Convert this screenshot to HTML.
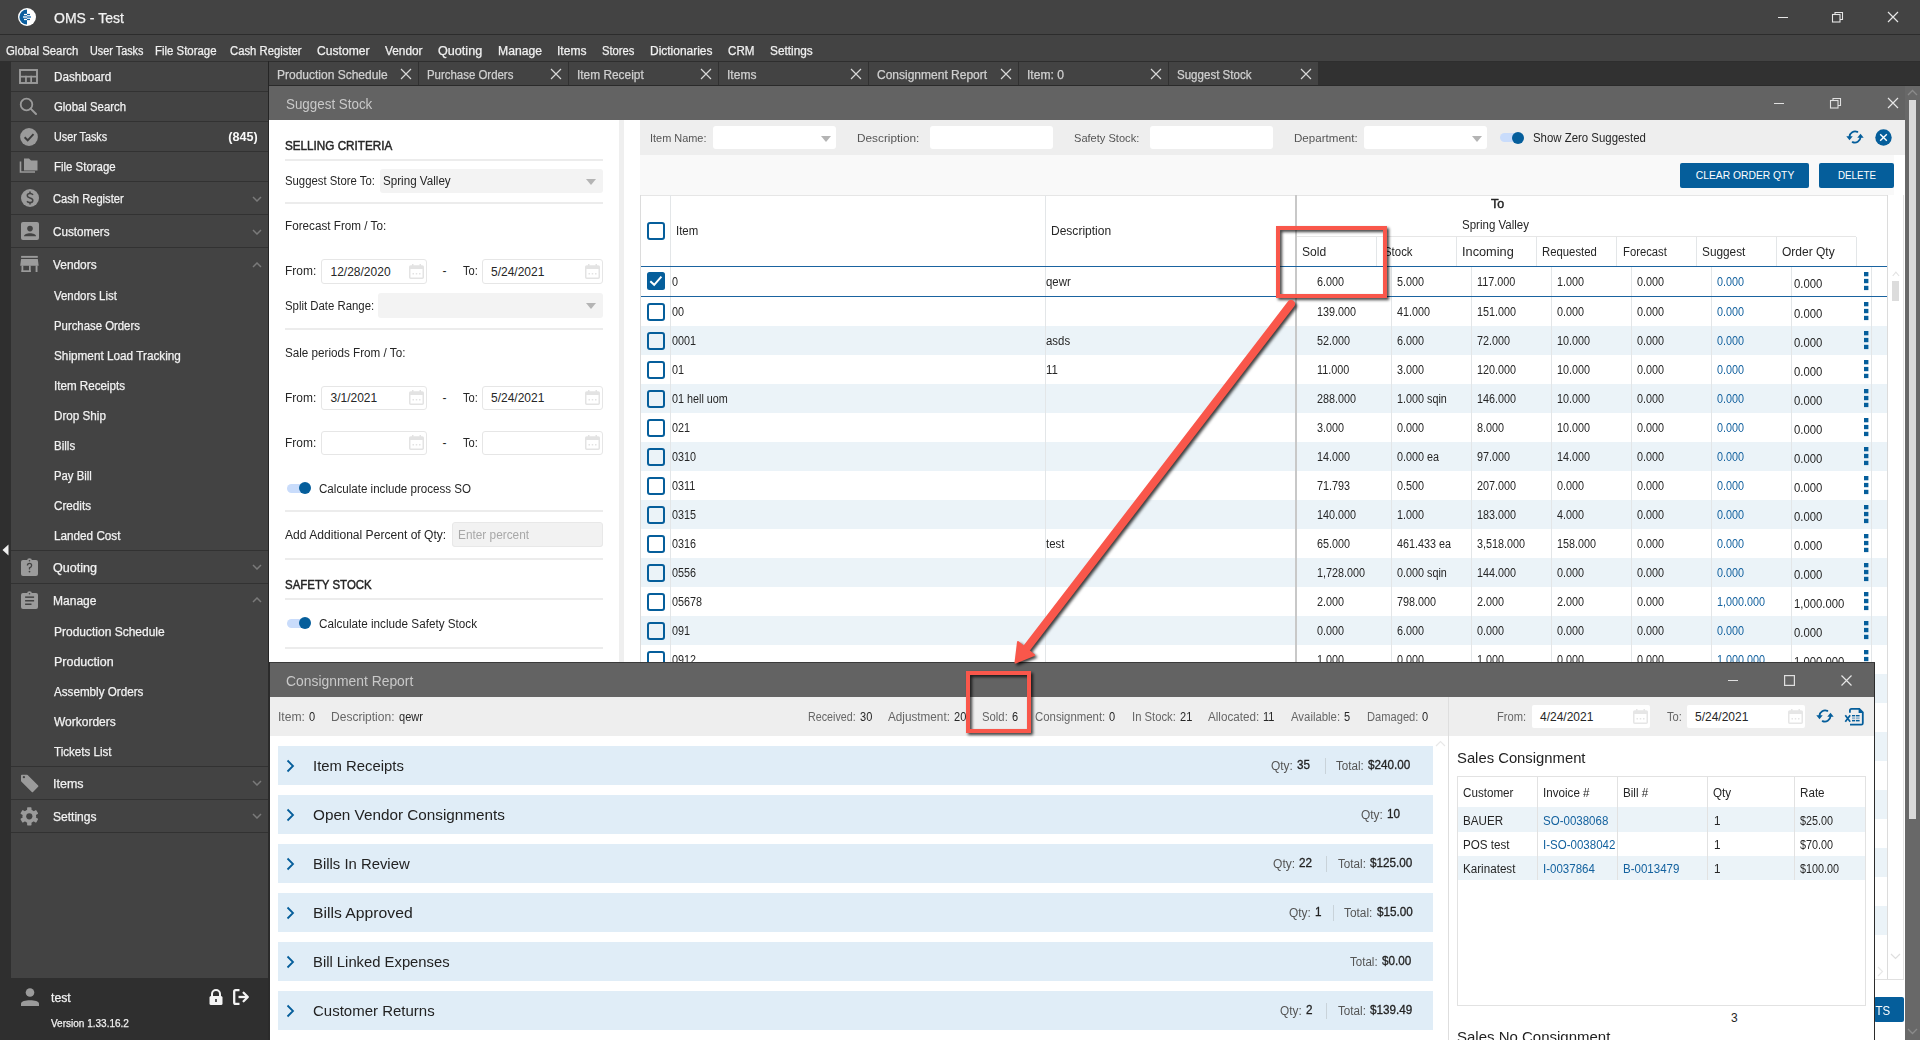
<!DOCTYPE html><html><head><meta charset="utf-8"><style>
html,body{margin:0;padding:0;width:1920px;height:1040px;overflow:hidden;background:#2f2f2f;font-family:"Liberation Sans",sans-serif;}
.r{position:absolute;}
.t{position:absolute;white-space:pre;line-height:1;}
.lt{-webkit-text-stroke:0.25px currentColor;}
.sb{-webkit-text-stroke:0.45px currentColor;}
.sm{-webkit-text-stroke:0.3px currentColor;}
</style></head><body>
<div class="r" style="left:0px;top:0px;width:1920px;height:34px;background:#434343;"></div>
<div class="r" style="left:0px;top:34px;width:1920px;height:1px;background:#2c2c2c;"></div>
<div class="r" style="left:0px;top:35px;width:1920px;height:26px;background:#434343;"></div>
<svg class="r" style="left:17px;top:7px;" width="20" height="20" viewBox="0 0 20 20"><circle cx="10" cy="10" r="9" fill="#fff"/><path d="M10 2.4 A7.6 7.6 0 0 0 10 17.6 Z" fill="#0b5e9e"/><rect x="7" y="6.9" width="3" height="1.3" fill="#fff"/><rect x="10" y="6.9" width="3" height="1.3" fill="#0b5e9e"/><rect x="6" y="9.2" width="4" height="1.6" fill="#cfe0ee"/><rect x="10" y="9.2" width="4" height="1.6" fill="#3f86c0"/><rect x="7" y="11.8" width="3" height="1.3" fill="#fff"/><rect x="10" y="11.8" width="3" height="1.3" fill="#0b5e9e"/></svg>
<div class="t lt" style="left:54px;transform:scaleX(1.0011);transform-origin:0 0;top:11.05px;font-size:14px;color:#f2f2f2;font-weight:normal;">OMS - Test</div>
<div class="r" style="left:1778px;top:16.5px;width:10px;height:1.2px;background:#e6e6e6;"></div>
<svg class="r" style="left:1831px;top:11px;" width="13" height="12" viewBox="0 0 13 12"><rect x="1.5" y="3.5" width="7.5" height="7.5" fill="none" stroke="#e6e6e6" stroke-width="1.1"/><path d="M4 3.5 V1.5 H11.5 V8.5 H9" fill="none" stroke="#e6e6e6" stroke-width="1.1"/></svg>
<svg class="r" style="left:1887px;top:11px;" width="12" height="12" viewBox="0 0 12 12"><path d="M1 1 L11 11 M11 1 L1 11" stroke="#e6e6e6" stroke-width="1.2"/></svg>
<div class="t lt" style="left:5.6px;transform:scaleX(0.9505);transform-origin:0 0;top:44.72px;font-size:12px;color:#f0f0f0;font-weight:normal;">Global Search</div>
<div class="t lt" style="left:89.6px;transform:scaleX(0.9038);transform-origin:0 0;top:44.72px;font-size:12px;color:#f0f0f0;font-weight:normal;">User Tasks</div>
<div class="t lt" style="left:154.8px;transform:scaleX(0.9503);transform-origin:0 0;top:44.72px;font-size:12px;color:#f0f0f0;font-weight:normal;">File Storage</div>
<div class="t lt" style="left:229.6px;transform:scaleX(0.9414);transform-origin:0 0;top:44.72px;font-size:12px;color:#f0f0f0;font-weight:normal;">Cash Register</div>
<div class="t lt" style="left:316.7px;transform:scaleX(1.0098);transform-origin:0 0;top:44.72px;font-size:12px;color:#f0f0f0;font-weight:normal;">Customer</div>
<div class="t lt" style="left:384.7px;transform:scaleX(0.9859);transform-origin:0 0;top:44.72px;font-size:12px;color:#f0f0f0;font-weight:normal;">Vendor</div>
<div class="t lt" style="left:437.5px;transform:scaleX(1.0506);transform-origin:0 0;top:44.72px;font-size:12px;color:#f0f0f0;font-weight:normal;">Quoting</div>
<div class="t lt" style="left:497.5px;transform:scaleX(1.0139);transform-origin:0 0;top:44.72px;font-size:12px;color:#f0f0f0;font-weight:normal;">Manage</div>
<div class="t lt" style="left:556.5px;transform:scaleX(1.0044);transform-origin:0 0;top:44.72px;font-size:12px;color:#f0f0f0;font-weight:normal;">Items</div>
<div class="t lt" style="left:601.5px;transform:scaleX(0.9347);transform-origin:0 0;top:44.72px;font-size:12px;color:#f0f0f0;font-weight:normal;">Stores</div>
<div class="t lt" style="left:649.5px;transform:scaleX(0.9962);transform-origin:0 0;top:44.72px;font-size:12px;color:#f0f0f0;font-weight:normal;">Dictionaries</div>
<div class="t lt" style="left:727.5px;transform:scaleX(0.9677);transform-origin:0 0;top:44.72px;font-size:12px;color:#f0f0f0;font-weight:normal;">CRM</div>
<div class="t lt" style="left:769.5px;transform:scaleX(0.985);transform-origin:0 0;top:44.72px;font-size:12px;color:#f0f0f0;font-weight:normal;">Settings</div>
<div class="r" style="left:0px;top:61px;width:11px;height:979px;background:#2f2f2f;"></div>
<svg class="r" style="left:2px;top:544px;" width="7" height="12" viewBox="0 0 7 12"><path d="M6.5 0.5 L6.5 11.5 L0.5 6 Z" fill="#f0f0f0"/></svg>
<div class="r" style="left:11px;top:61px;width:257px;height:917px;background:#434343;"></div>
<div class="r" style="left:268px;top:61px;width:2px;height:979px;background:#252525;"></div>
<div class="r" style="left:0px;top:978px;width:268px;height:62px;background:#2f2f2f;"></div>
<div class="r" style="left:11px;top:61px;width:257px;height:1px;background:#323232;"></div>
<div class="t lt" style="left:53.8px;transform:scaleX(0.9742);transform-origin:0 0;top:70.82px;font-size:12px;color:#f2f2f2;font-weight:normal;">Dashboard</div>
<div class="r" style="left:11px;top:91px;width:257px;height:1px;background:#323232;"></div>
<div class="t lt" style="left:53.8px;transform:scaleX(0.9465);transform-origin:0 0;top:100.82px;font-size:12px;color:#f2f2f2;font-weight:normal;">Global Search</div>
<div class="r" style="left:11px;top:121px;width:257px;height:1px;background:#323232;"></div>
<div class="t lt" style="left:53.8px;transform:scaleX(0.8987);transform-origin:0 0;top:130.62px;font-size:12px;color:#f2f2f2;font-weight:normal;">User Tasks</div>
<div class="r" style="left:11px;top:151px;width:257px;height:1px;background:#323232;"></div>
<div class="t lt" style="left:53.8px;transform:scaleX(0.9534);transform-origin:0 0;top:160.92px;font-size:12px;color:#f2f2f2;font-weight:normal;">File Storage</div>
<div class="r" style="left:11px;top:181px;width:257px;height:1px;background:#323232;"></div>
<div class="t lt" style="left:52.6px;transform:scaleX(0.9295);transform-origin:0 0;top:193.02px;font-size:12px;color:#f2f2f2;font-weight:normal;">Cash Register</div>
<div class="r" style="left:11px;top:214px;width:257px;height:1px;background:#323232;"></div>
<div class="t lt" style="left:52.6px;transform:scaleX(0.9739);transform-origin:0 0;top:226.22px;font-size:12px;color:#f2f2f2;font-weight:normal;">Customers</div>
<div class="r" style="left:11px;top:247px;width:257px;height:1px;background:#323232;"></div>
<div class="t lt" style="left:52.8px;transform:scaleX(0.9901);transform-origin:0 0;top:258.52px;font-size:12px;color:#f2f2f2;font-weight:normal;">Vendors</div>
<div class="r" style="left:11px;top:61px;width:257px;height:1px;background:#323232;"></div>
<div class="t" style="right:1662.5px;transform:scaleX(1.0257);transform-origin:100% 0;top:130.87px;font-size:12.3px;color:#f8f8f8;font-weight:bold;">(845)</div>
<svg class="r" style="left:19px;top:69px;" width="19" height="15" viewBox="0 0 19 15"><rect x="1" y="1" width="17" height="13" fill="none" stroke="#9b9b9b" stroke-width="1.9"/><rect x="1" y="6.8" width="17" height="1.7" fill="#9b9b9b"/><rect x="6.1" y="6.8" width="1.7" height="7" fill="#9b9b9b"/><rect x="11.3" y="6.8" width="1.7" height="7" fill="#9b9b9b"/></svg>
<svg class="r" style="left:19px;top:97px;" width="18" height="19" viewBox="0 0 18 19"><circle cx="7.5" cy="7.5" r="5.8" fill="none" stroke="#9b9b9b" stroke-width="1.8"/><path d="M11.6 11.6 L17 17" stroke="#9b9b9b" stroke-width="2" stroke-linecap="round"/></svg>
<svg class="r" style="left:19.5px;top:127.5px;" width="18" height="18" viewBox="0 0 18 18"><circle cx="9" cy="9" r="8.9" fill="#9b9b9b"/><path d="M4.6 9.3 L7.7 12.3 L13.5 6.2" fill="none" stroke="#3c3c3c" stroke-width="1.9"/></svg>
<svg class="r" style="left:19px;top:158px;" width="19" height="15" viewBox="0 0 19 15"><path d="M5 0.5 H10 L12 2.5 H18.5 V12.5 H5 Z" fill="#9b9b9b"/><path d="M1.5 3.5 V14 H16" fill="none" stroke="#9b9b9b" stroke-width="1.6"/></svg>
<svg class="r" style="left:20.6px;top:189.2px;" width="18" height="18" viewBox="0 0 18 18"><circle cx="9" cy="9" r="9" fill="#9b9b9b"/><path d="M12 5.8 Q11.2 4.5 9 4.5 Q6.3 4.5 6.3 6.6 Q6.3 8.3 9 8.9 Q11.8 9.5 11.8 11.4 Q11.8 13.5 9 13.5 Q6.9 13.5 6 12.2" fill="none" stroke="#434343" stroke-width="1.5"/><path d="M9 2.6 V4.6 M9 13.4 V15.4" stroke="#434343" stroke-width="1.5"/></svg>
<svg class="r" style="left:20.5px;top:222px;" width="18" height="18" viewBox="0 0 18 18"><rect x="0" y="0" width="18" height="18" rx="2" fill="#9b9b9b"/><circle cx="9" cy="6.6" r="2.8" fill="#434343"/><path d="M3 14.2 C3 10.2 15 10.2 15 14.2 Z" fill="#434343"/></svg>
<svg class="r" style="left:20px;top:255px;" width="19" height="18" viewBox="0 0 19 18"><rect x="1.1" y="0.9" width="16.7" height="1.9" fill="#9b9b9b"/><path d="M1.1 4.1 H17.8 L18.7 10.7 H0.2 Z" fill="#9b9b9b"/><rect x="1.5" y="10.5" width="1.8" height="6.5" fill="#9b9b9b"/><rect x="1.5" y="15.3" width="9.2" height="1.7" fill="#9b9b9b"/><rect x="9" y="10.5" width="1.7" height="6.5" fill="#9b9b9b"/><rect x="15.6" y="10.5" width="1.9" height="6.5" fill="#9b9b9b"/></svg>
<svg class="r" style="left:252px;top:195.5px;" width="10" height="6" viewBox="0 0 10 6"><path d="M1 1 L5 5 L9 1" fill="none" stroke="#7a7a7a" stroke-width="1.5"/></svg>
<svg class="r" style="left:252px;top:228.5px;" width="10" height="6" viewBox="0 0 10 6"><path d="M1 1 L5 5 L9 1" fill="none" stroke="#7a7a7a" stroke-width="1.5"/></svg>
<svg class="r" style="left:252px;top:261.5px;" width="10" height="6" viewBox="0 0 10 6"><path d="M1 5 L5 1 L9 5" fill="none" stroke="#7a7a7a" stroke-width="1.5"/></svg>
<div class="t lt" style="left:53.9px;transform:scaleX(0.9521);transform-origin:0 0;top:290.32px;font-size:12px;color:#f2f2f2;font-weight:normal;">Vendors List</div>
<div class="t lt" style="left:53.9px;transform:scaleX(0.9468);transform-origin:0 0;top:320.32px;font-size:12px;color:#f2f2f2;font-weight:normal;">Purchase Orders</div>
<div class="t lt" style="left:53.9px;transform:scaleX(0.9806);transform-origin:0 0;top:350.32px;font-size:12px;color:#f2f2f2;font-weight:normal;">Shipment Load Tracking</div>
<div class="t lt" style="left:53.9px;transform:scaleX(0.9692);transform-origin:0 0;top:380.32px;font-size:12px;color:#f2f2f2;font-weight:normal;">Item Receipts</div>
<div class="t lt" style="left:53.9px;transform:scaleX(0.9724);transform-origin:0 0;top:410.32px;font-size:12px;color:#f2f2f2;font-weight:normal;">Drop Ship</div>
<div class="t lt" style="left:53.9px;transform:scaleX(0.9626);transform-origin:0 0;top:440.32px;font-size:12px;color:#f2f2f2;font-weight:normal;">Bills</div>
<div class="t lt" style="left:53.9px;transform:scaleX(0.9441);transform-origin:0 0;top:470.32px;font-size:12px;color:#f2f2f2;font-weight:normal;">Pay Bill</div>
<div class="t lt" style="left:53.9px;transform:scaleX(0.9733);transform-origin:0 0;top:500.32px;font-size:12px;color:#f2f2f2;font-weight:normal;">Credits</div>
<div class="t lt" style="left:53.9px;transform:scaleX(0.9771);transform-origin:0 0;top:530.32px;font-size:12px;color:#f2f2f2;font-weight:normal;">Landed Cost</div>
<div class="r" style="left:11px;top:550px;width:257px;height:1px;background:#323232;"></div>
<div class="t lt" style="left:52.9px;transform:scaleX(1.0481);transform-origin:0 0;top:561.72px;font-size:12px;color:#f2f2f2;font-weight:normal;">Quoting</div>
<svg class="r" style="left:252px;top:564px;" width="10" height="6" viewBox="0 0 10 6"><path d="M1 1 L5 5 L9 1" fill="none" stroke="#7a7a7a" stroke-width="1.5"/></svg>
<svg class="r" style="left:21px;top:558px;" width="17" height="18" viewBox="0 0 17 18"><rect x="0" y="2" width="17" height="16" rx="2" fill="#9b9b9b"/><circle cx="8.5" cy="2.6" r="2.4" fill="#9b9b9b"/><circle cx="8.5" cy="2.8" r="0.8" fill="#434343"/><path d="M6.4 7.6 Q6.4 5.4 8.5 5.4 Q10.6 5.4 10.6 7.4 Q10.6 8.8 8.5 9.8 V11.4" fill="none" stroke="#434343" stroke-width="1.3"/><circle cx="8.5" cy="13.6" r="0.9" fill="#434343"/></svg>
<div class="r" style="left:11px;top:583px;width:257px;height:1px;background:#323232;"></div>
<div class="t lt" style="left:52.9px;transform:scaleX(1.0034);transform-origin:0 0;top:594.72px;font-size:12px;color:#f2f2f2;font-weight:normal;">Manage</div>
<svg class="r" style="left:252px;top:597px;" width="10" height="6" viewBox="0 0 10 6"><path d="M1 5 L5 1 L9 5" fill="none" stroke="#7a7a7a" stroke-width="1.5"/></svg>
<svg class="r" style="left:21px;top:591px;" width="17" height="18" viewBox="0 0 17 18"><rect x="0" y="2" width="17" height="16" rx="2" fill="#9b9b9b"/><circle cx="8.5" cy="2.6" r="2.4" fill="#9b9b9b"/><circle cx="8.5" cy="2.8" r="0.8" fill="#434343"/><rect x="4.1" y="5.4" width="9" height="1.5" fill="#434343"/><rect x="4.1" y="9" width="9" height="1.5" fill="#434343"/><rect x="4.1" y="12.5" width="6.4" height="1.5" fill="#434343"/></svg>
<div class="t lt" style="left:53.9px;transform:scaleX(0.9997);transform-origin:0 0;top:626.22px;font-size:12px;color:#f2f2f2;font-weight:normal;">Production Schedule</div>
<div class="t lt" style="left:53.9px;transform:scaleX(1.0396);transform-origin:0 0;top:656.22px;font-size:12px;color:#f2f2f2;font-weight:normal;">Production</div>
<div class="t lt" style="left:53.9px;transform:scaleX(0.9714);transform-origin:0 0;top:686.22px;font-size:12px;color:#f2f2f2;font-weight:normal;">Assembly Orders</div>
<div class="t lt" style="left:53.9px;transform:scaleX(0.9987);transform-origin:0 0;top:716.22px;font-size:12px;color:#f2f2f2;font-weight:normal;">Workorders</div>
<div class="t lt" style="left:53.9px;transform:scaleX(0.965);transform-origin:0 0;top:746.22px;font-size:12px;color:#f2f2f2;font-weight:normal;">Tickets List</div>
<div class="r" style="left:11px;top:766px;width:257px;height:1px;background:#323232;"></div>
<div class="t lt" style="left:52.9px;transform:scaleX(1.0411);transform-origin:0 0;top:777.72px;font-size:12px;color:#f2f2f2;font-weight:normal;">Items</div>
<svg class="r" style="left:252px;top:780px;" width="10" height="6" viewBox="0 0 10 6"><path d="M1 1 L5 5 L9 1" fill="none" stroke="#7a7a7a" stroke-width="1.5"/></svg>
<svg class="r" style="left:20px;top:773px;" width="20" height="20" viewBox="0 0 20 20"><path d="M1.9 2.7 H7 L17.5 13.2 L12.4 18.3 L1.9 7.8 Z" fill="#9b9b9b" stroke="#9b9b9b" stroke-width="1.8" stroke-linejoin="round"/><circle cx="3.9" cy="4.2" r="1.15" fill="#434343"/></svg>
<div class="r" style="left:11px;top:799px;width:257px;height:1px;background:#323232;"></div>
<div class="t lt" style="left:52.9px;transform:scaleX(1.0038);transform-origin:0 0;top:810.72px;font-size:12px;color:#f2f2f2;font-weight:normal;">Settings</div>
<svg class="r" style="left:252px;top:813px;" width="10" height="6" viewBox="0 0 10 6"><path d="M1 1 L5 5 L9 1" fill="none" stroke="#7a7a7a" stroke-width="1.5"/></svg>
<svg class="r" style="left:20px;top:806.6px;" width="19" height="19" viewBox="0 0 19 19"><g transform="translate(9.3 9.3)"><g fill="#9b9b9b"><rect x="-2.2" y="-9.1" width="4.4" height="5" rx="0.7" transform="rotate(0)"/><rect x="-2.2" y="-9.1" width="4.4" height="5" rx="0.7" transform="rotate(60)"/><rect x="-2.2" y="-9.1" width="4.4" height="5" rx="0.7" transform="rotate(120)"/><rect x="-2.2" y="-9.1" width="4.4" height="5" rx="0.7" transform="rotate(180)"/><rect x="-2.2" y="-9.1" width="4.4" height="5" rx="0.7" transform="rotate(240)"/><rect x="-2.2" y="-9.1" width="4.4" height="5" rx="0.7" transform="rotate(300)"/></g><circle r="6.8" fill="#9b9b9b"/><circle r="3.1" fill="#434343"/></g></svg>
<div class="r" style="left:11px;top:832px;width:257px;height:1px;background:#323232;"></div>
<svg class="r" style="left:21px;top:988px;" width="18" height="18" viewBox="0 0 18 18"><circle cx="9" cy="4.5" r="4.3" fill="#9b9b9b"/><path d="M0 18 V15.5 C0 11 18 11 18 15.5 V18 Z" fill="#9b9b9b"/></svg>
<div class="t lt" style="left:50.8px;transform:scaleX(1.0202);transform-origin:0 0;top:991.72px;font-size:12px;color:#f2f2f2;font-weight:normal;">test</div>
<div class="t lt" style="left:50.8px;transform:scaleX(0.9098);transform-origin:0 0;top:1017.70px;font-size:11px;color:#f2f2f2;font-weight:normal;">Version 1.33.16.2</div>
<svg class="r" style="left:209px;top:989px;" width="14" height="16" viewBox="0 0 14 16"><path d="M3 7 V5 A4 4 0 0 1 11 5 V7" fill="none" stroke="#f4f4f4" stroke-width="2"/><rect x="0.5" y="7" width="13" height="9" rx="1.5" fill="#f4f4f4"/><rect x="6.2" y="10" width="1.6" height="3" fill="#2f2f2f"/></svg>
<svg class="r" style="left:233px;top:989px;" width="18" height="16" viewBox="0 0 18 16"><path d="M6.5 1.2 H2.6 Q1.2 1.2 1.2 2.6 V13.4 Q1.2 14.8 2.6 14.8 H6.5" fill="none" stroke="#f4f4f4" stroke-width="2.3"/><path d="M5.5 8 H14.5" stroke="#f4f4f4" stroke-width="2.3"/><path d="M10.6 3.8 L14.8 8 L10.6 12.2" fill="none" stroke="#f4f4f4" stroke-width="2.3" stroke-linecap="round" stroke-linejoin="round"/></svg>
<div class="r" style="left:270px;top:61px;width:1650px;height:25px;background:#313131;"></div>
<div class="r" style="left:269px;top:62px;width:149px;height:23px;background:#434343;"></div>
<div class="t lt" style="left:277.3px;transform:scaleX(0.9997);transform-origin:0 0;top:68.92px;font-size:12px;color:#d0d0d0;font-weight:normal;">Production Schedule</div>
<svg class="r" style="left:400px;top:68px;" width="12" height="12" viewBox="0 0 12 12"><path d="M1 1 L11 11 M11 1 L1 11" stroke="#d8d8d8" stroke-width="1.2"/></svg>
<div class="r" style="left:419px;top:62px;width:149px;height:23px;background:#434343;"></div>
<div class="t lt" style="left:427.3px;transform:scaleX(0.9524);transform-origin:0 0;top:68.92px;font-size:12px;color:#d0d0d0;font-weight:normal;">Purchase Orders</div>
<svg class="r" style="left:550px;top:68px;" width="12" height="12" viewBox="0 0 12 12"><path d="M1 1 L11 11 M11 1 L1 11" stroke="#d8d8d8" stroke-width="1.2"/></svg>
<div class="r" style="left:569px;top:62px;width:149px;height:23px;background:#434343;"></div>
<div class="t lt" style="left:577.3px;transform:scaleX(0.9904);transform-origin:0 0;top:68.92px;font-size:12px;color:#d0d0d0;font-weight:normal;">Item Receipt</div>
<svg class="r" style="left:700px;top:68px;" width="12" height="12" viewBox="0 0 12 12"><path d="M1 1 L11 11 M11 1 L1 11" stroke="#d8d8d8" stroke-width="1.2"/></svg>
<div class="r" style="left:719px;top:62px;width:149px;height:23px;background:#434343;"></div>
<div class="t lt" style="left:727.3px;transform:scaleX(1.0044);transform-origin:0 0;top:68.92px;font-size:12px;color:#d0d0d0;font-weight:normal;">Items</div>
<svg class="r" style="left:850px;top:68px;" width="12" height="12" viewBox="0 0 12 12"><path d="M1 1 L11 11 M11 1 L1 11" stroke="#d8d8d8" stroke-width="1.2"/></svg>
<div class="r" style="left:869px;top:62px;width:149px;height:23px;background:#434343;"></div>
<div class="t lt" style="left:877.3px;transform:scaleX(1.0005);transform-origin:0 0;top:68.92px;font-size:12px;color:#d0d0d0;font-weight:normal;">Consignment Report</div>
<svg class="r" style="left:1000px;top:68px;" width="12" height="12" viewBox="0 0 12 12"><path d="M1 1 L11 11 M11 1 L1 11" stroke="#d8d8d8" stroke-width="1.2"/></svg>
<div class="r" style="left:1019px;top:62px;width:149px;height:23px;background:#434343;"></div>
<div class="t lt" style="left:1027.3px;transform:scaleX(1.0079);transform-origin:0 0;top:68.92px;font-size:12px;color:#d0d0d0;font-weight:normal;">Item: 0</div>
<svg class="r" style="left:1150px;top:68px;" width="12" height="12" viewBox="0 0 12 12"><path d="M1 1 L11 11 M11 1 L1 11" stroke="#d8d8d8" stroke-width="1.2"/></svg>
<div class="r" style="left:1169px;top:62px;width:149px;height:23px;background:#434343;"></div>
<div class="t lt" style="left:1177.3px;transform:scaleX(0.9619);transform-origin:0 0;top:68.92px;font-size:12px;color:#d0d0d0;font-weight:normal;">Suggest Stock</div>
<svg class="r" style="left:1300px;top:68px;" width="12" height="12" viewBox="0 0 12 12"><path d="M1 1 L11 11 M11 1 L1 11" stroke="#d8d8d8" stroke-width="1.2"/></svg>
<div class="r" style="left:269px;top:85px;width:1651px;height:1px;background:#2a2a2a;"></div>
<div class="r" style="left:269px;top:61px;width:1651px;height:1px;background:#2e2e2e;"></div>
<div class="r" style="left:269px;top:86px;width:1636px;height:34px;background:#636363;"></div>
<div class="t" style="left:285.5px;transform:scaleX(0.9559);transform-origin:0 0;top:96.95px;font-size:14px;color:#c9c9c9;font-weight:normal;">Suggest Stock</div>
<div class="r" style="left:1774px;top:102.5px;width:10px;height:1.2px;background:#e0e0e0;"></div>
<svg class="r" style="left:1829px;top:97px;" width="13" height="12" viewBox="0 0 13 12"><rect x="1.5" y="3.5" width="7.5" height="7.5" fill="none" stroke="#e0e0e0" stroke-width="1.1"/><path d="M4 3.5 V1.5 H11.5 V8.5 H9" fill="none" stroke="#e0e0e0" stroke-width="1.1"/></svg>
<svg class="r" style="left:1887px;top:97px;" width="12" height="12" viewBox="0 0 12 12"><path d="M1 1 L11 11 M11 1 L1 11" stroke="#e6e6e6" stroke-width="1.2"/></svg>
<div class="r" style="left:269px;top:120px;width:1636px;height:920px;background:#ffffff;"></div>
<div class="t sb" style="left:285px;transform:scaleX(0.9743);transform-origin:0 0;top:139.72px;font-size:12px;color:#262626;font-weight:normal;">SELLING CRITERIA</div>
<div class="r" style="left:285px;top:158.5px;width:318px;height:2px;background:#ececec;"></div>
<div class="t" style="left:285px;transform:scaleX(0.9448);transform-origin:0 0;top:174.92px;font-size:12px;color:#262626;font-weight:normal;">Suggest Store To:</div>
<div class="r" style="left:380px;top:168.5px;width:223px;height:24.5px;background:#f3f3f3;border-radius:3px;"></div>
<div class="t" style="left:383px;transform:scaleX(0.9695);transform-origin:0 0;top:174.92px;font-size:12px;color:#262626;font-weight:normal;">Spring Valley</div>
<svg class="r" style="left:585.5px;top:178.5px;" width="10" height="6" viewBox="0 0 10 6"><path d="M0 0 H10 L5 6 Z" fill="#b4b4b4"/></svg>
<div class="r" style="left:285px;top:201.5px;width:318px;height:2px;background:#ececec;"></div>
<div class="t" style="left:285px;transform:scaleX(0.9749);transform-origin:0 0;top:220.22px;font-size:12px;color:#262626;font-weight:normal;">Forecast From / To:</div>
<div class="t" style="left:285px;transform:scaleX(0.996);transform-origin:0 0;top:265.22px;font-size:12px;color:#262626;font-weight:normal;">From:</div>
<div class="r" style="left:321px;top:258.5px;width:103.5px;height:23.0px;border:1px solid #e6e6e6;border-radius:3px;background:#fff;"></div>
<div class="t" style="left:330.5px;top:265.52px;font-size:12px;color:#262626;font-weight:normal;">12/28/2020</div>
<svg class="r" style="left:408.5px;top:263.5px;" width="15" height="15" viewBox="0 0 15 15"><rect x="0.75" y="2" width="13.5" height="12.25" rx="1" fill="none" stroke="#e3e3e3" stroke-width="1.5"/><rect x="0.75" y="2" width="13.5" height="3" fill="#e3e3e3"/><rect x="3" y="0" width="1.5" height="3" fill="#e3e3e3"/><rect x="10.5" y="0" width="1.5" height="3" fill="#e3e3e3"/><rect x="3.5" y="9" width="1.5" height="1.5" fill="#e3e3e3"/><rect x="6.75" y="9" width="1.5" height="1.5" fill="#e3e3e3"/><rect x="10" y="9" width="1.5" height="1.5" fill="#e3e3e3"/></svg>
<div class="t" style="left:442.5px;top:265.22px;font-size:12px;color:#262626;font-weight:normal;">-</div>
<div class="t" style="left:462.5px;transform:scaleX(0.9284);transform-origin:0 0;top:265.22px;font-size:12px;color:#262626;font-weight:normal;">To:</div>
<div class="r" style="left:481.5px;top:258.5px;width:119.5px;height:23.0px;border:1px solid #e6e6e6;border-radius:3px;background:#fff;"></div>
<div class="t" style="left:491.0px;top:265.52px;font-size:12px;color:#262626;font-weight:normal;">5/24/2021</div>
<svg class="r" style="left:585px;top:263.5px;" width="15" height="15" viewBox="0 0 15 15"><rect x="0.75" y="2" width="13.5" height="12.25" rx="1" fill="none" stroke="#e3e3e3" stroke-width="1.5"/><rect x="0.75" y="2" width="13.5" height="3" fill="#e3e3e3"/><rect x="3" y="0" width="1.5" height="3" fill="#e3e3e3"/><rect x="10.5" y="0" width="1.5" height="3" fill="#e3e3e3"/><rect x="3.5" y="9" width="1.5" height="1.5" fill="#e3e3e3"/><rect x="6.75" y="9" width="1.5" height="1.5" fill="#e3e3e3"/><rect x="10" y="9" width="1.5" height="1.5" fill="#e3e3e3"/></svg>
<div class="t" style="left:285px;transform:scaleX(0.9481);transform-origin:0 0;top:300.22px;font-size:12px;color:#262626;font-weight:normal;">Split Date Range:</div>
<div class="r" style="left:378px;top:293px;width:225px;height:24.5px;background:#f3f3f3;border-radius:3px;"></div>
<svg class="r" style="left:585.5px;top:303px;" width="10" height="6" viewBox="0 0 10 6"><path d="M0 0 H10 L5 6 Z" fill="#b4b4b4"/></svg>
<div class="r" style="left:285px;top:328px;width:318px;height:2px;background:#ececec;"></div>
<div class="t" style="left:285px;transform:scaleX(0.9722);transform-origin:0 0;top:347.22px;font-size:12px;color:#262626;font-weight:normal;">Sale periods From / To:</div>
<div class="t" style="left:285px;transform:scaleX(0.996);transform-origin:0 0;top:392.22px;font-size:12px;color:#262626;font-weight:normal;">From:</div>
<div class="r" style="left:321px;top:385.5px;width:103.5px;height:22.5px;border:1px solid #e6e6e6;border-radius:3px;background:#fff;"></div>
<div class="t" style="left:330.5px;top:392.27px;font-size:12px;color:#262626;font-weight:normal;">3/1/2021</div>
<svg class="r" style="left:408.5px;top:390.25px;" width="15" height="15" viewBox="0 0 15 15"><rect x="0.75" y="2" width="13.5" height="12.25" rx="1" fill="none" stroke="#e3e3e3" stroke-width="1.5"/><rect x="0.75" y="2" width="13.5" height="3" fill="#e3e3e3"/><rect x="3" y="0" width="1.5" height="3" fill="#e3e3e3"/><rect x="10.5" y="0" width="1.5" height="3" fill="#e3e3e3"/><rect x="3.5" y="9" width="1.5" height="1.5" fill="#e3e3e3"/><rect x="6.75" y="9" width="1.5" height="1.5" fill="#e3e3e3"/><rect x="10" y="9" width="1.5" height="1.5" fill="#e3e3e3"/></svg>
<div class="t" style="left:442.5px;top:392.22px;font-size:12px;color:#262626;font-weight:normal;">-</div>
<div class="t" style="left:462.5px;transform:scaleX(0.9284);transform-origin:0 0;top:392.22px;font-size:12px;color:#262626;font-weight:normal;">To:</div>
<div class="r" style="left:481.5px;top:385.5px;width:119.5px;height:22.5px;border:1px solid #e6e6e6;border-radius:3px;background:#fff;"></div>
<div class="t" style="left:491.0px;top:392.27px;font-size:12px;color:#262626;font-weight:normal;">5/24/2021</div>
<svg class="r" style="left:585px;top:390.25px;" width="15" height="15" viewBox="0 0 15 15"><rect x="0.75" y="2" width="13.5" height="12.25" rx="1" fill="none" stroke="#e3e3e3" stroke-width="1.5"/><rect x="0.75" y="2" width="13.5" height="3" fill="#e3e3e3"/><rect x="3" y="0" width="1.5" height="3" fill="#e3e3e3"/><rect x="10.5" y="0" width="1.5" height="3" fill="#e3e3e3"/><rect x="3.5" y="9" width="1.5" height="1.5" fill="#e3e3e3"/><rect x="6.75" y="9" width="1.5" height="1.5" fill="#e3e3e3"/><rect x="10" y="9" width="1.5" height="1.5" fill="#e3e3e3"/></svg>
<div class="t" style="left:285px;transform:scaleX(0.996);transform-origin:0 0;top:437.22px;font-size:12px;color:#262626;font-weight:normal;">From:</div>
<div class="r" style="left:321px;top:430.5px;width:103.5px;height:22.5px;border:1px solid #e6e6e6;border-radius:3px;background:#fff;"></div>
<svg class="r" style="left:408.5px;top:435.25px;" width="15" height="15" viewBox="0 0 15 15"><rect x="0.75" y="2" width="13.5" height="12.25" rx="1" fill="none" stroke="#e3e3e3" stroke-width="1.5"/><rect x="0.75" y="2" width="13.5" height="3" fill="#e3e3e3"/><rect x="3" y="0" width="1.5" height="3" fill="#e3e3e3"/><rect x="10.5" y="0" width="1.5" height="3" fill="#e3e3e3"/><rect x="3.5" y="9" width="1.5" height="1.5" fill="#e3e3e3"/><rect x="6.75" y="9" width="1.5" height="1.5" fill="#e3e3e3"/><rect x="10" y="9" width="1.5" height="1.5" fill="#e3e3e3"/></svg>
<div class="t" style="left:442.5px;top:437.22px;font-size:12px;color:#262626;font-weight:normal;">-</div>
<div class="t" style="left:462.5px;transform:scaleX(0.9284);transform-origin:0 0;top:437.22px;font-size:12px;color:#262626;font-weight:normal;">To:</div>
<div class="r" style="left:481.5px;top:430.5px;width:119.5px;height:22.5px;border:1px solid #e6e6e6;border-radius:3px;background:#fff;"></div>
<svg class="r" style="left:585px;top:435.25px;" width="15" height="15" viewBox="0 0 15 15"><rect x="0.75" y="2" width="13.5" height="12.25" rx="1" fill="none" stroke="#e3e3e3" stroke-width="1.5"/><rect x="0.75" y="2" width="13.5" height="3" fill="#e3e3e3"/><rect x="3" y="0" width="1.5" height="3" fill="#e3e3e3"/><rect x="10.5" y="0" width="1.5" height="3" fill="#e3e3e3"/><rect x="3.5" y="9" width="1.5" height="1.5" fill="#e3e3e3"/><rect x="6.75" y="9" width="1.5" height="1.5" fill="#e3e3e3"/><rect x="10" y="9" width="1.5" height="1.5" fill="#e3e3e3"/></svg>
<div class="r" style="left:287px;top:483.5px;width:18px;height:9px;background:#c9dcfb;border-radius:4.5px;"></div>
<div class="r" style="left:299px;top:482px;width:12px;height:12px;border-radius:50%;background:#055e9b;"></div>
<div class="t" style="left:319.3px;transform:scaleX(0.9662);transform-origin:0 0;top:483.02px;font-size:12px;color:#262626;font-weight:normal;">Calculate include process SO</div>
<div class="r" style="left:285px;top:510px;width:318px;height:2px;background:#ececec;"></div>
<div class="t" style="left:285px;transform:scaleX(1.007);transform-origin:0 0;top:529.22px;font-size:12px;color:#262626;font-weight:normal;">Add Additional Percent of Qty:</div>
<div class="r" style="left:452px;top:522.5px;width:151px;height:24px;background:#f2f2f2;border-radius:3px;border:0;"></div>
<div class="r" style="left:452px;top:522px;width:149px;height:23px;border:1px solid #e8e8e8;border-radius:3px;"></div>
<div class="t" style="left:458.3px;transform:scaleX(0.9856);transform-origin:0 0;top:529.22px;font-size:12px;color:#a8a8a8;font-weight:normal;">Enter percent</div>
<div class="r" style="left:285px;top:557.5px;width:318px;height:2px;background:#ececec;"></div>
<div class="t sb" style="left:285px;transform:scaleX(0.9534);transform-origin:0 0;top:578.72px;font-size:12px;color:#262626;font-weight:normal;">SAFETY STOCK</div>
<div class="r" style="left:285px;top:598px;width:318px;height:2px;background:#ececec;"></div>
<div class="r" style="left:287px;top:618.5px;width:18px;height:9px;background:#c9dcfb;border-radius:4.5px;"></div>
<div class="r" style="left:299px;top:617px;width:12px;height:12px;border-radius:50%;background:#055e9b;"></div>
<div class="t" style="left:319.3px;transform:scaleX(0.9748);transform-origin:0 0;top:618.02px;font-size:12px;color:#262626;font-weight:normal;">Calculate include Safety Stock</div>
<div class="r" style="left:285px;top:646.5px;width:318px;height:2px;background:#ececec;"></div>
<div class="r" style="left:619px;top:120px;width:4.5px;height:542px;background:#efefef;"></div>
<div class="r" style="left:640px;top:120px;width:1265px;height:35px;background:#eeeeee;"></div>
<div class="t" style="left:650.4px;transform:scaleX(0.9498);transform-origin:0 0;top:132.66px;font-size:11.5px;color:#555555;font-weight:normal;">Item Name:</div>
<div class="r" style="left:712.7px;top:125.8px;width:123.3px;height:23.2px;background:#ffffff;border-radius:3px;"></div>
<svg class="r" style="left:821px;top:135.5px;" width="10" height="6" viewBox="0 0 10 6"><path d="M0 0 H10 L5 6 Z" fill="#b4b4b4"/></svg>
<div class="t" style="left:857px;transform:scaleX(1.0262);transform-origin:0 0;top:132.66px;font-size:11.5px;color:#555555;font-weight:normal;">Description:</div>
<div class="r" style="left:930px;top:125.8px;width:123px;height:23.2px;background:#ffffff;border-radius:3px;"></div>
<div class="t" style="left:1074px;transform:scaleX(0.9631);transform-origin:0 0;top:132.66px;font-size:11.5px;color:#555555;font-weight:normal;">Safety Stock:</div>
<div class="r" style="left:1150px;top:125.8px;width:122.8px;height:23.2px;background:#ffffff;border-radius:3px;"></div>
<div class="t" style="left:1294.4px;transform:scaleX(1.0065);transform-origin:0 0;top:132.66px;font-size:11.5px;color:#555555;font-weight:normal;">Department:</div>
<div class="r" style="left:1363.8px;top:125.8px;width:123.4px;height:23.2px;background:#ffffff;border-radius:3px;"></div>
<svg class="r" style="left:1472px;top:135.5px;" width="10" height="6" viewBox="0 0 10 6"><path d="M0 0 H10 L5 6 Z" fill="#b4b4b4"/></svg>
<div class="r" style="left:1500px;top:133.0px;width:18px;height:9px;background:#c9dcfb;border-radius:4.5px;"></div>
<div class="r" style="left:1512px;top:131.5px;width:12px;height:12px;border-radius:50%;background:#055e9b;"></div>
<div class="t" style="left:1532.5px;transform:scaleX(0.951);transform-origin:0 0;top:132.22px;font-size:12px;color:#262626;font-weight:normal;">Show Zero Suggested</div>
<svg class="r" style="left:1845px;top:129.1px;" width="20" height="16" viewBox="0 0 20 16"><path d="M12.4 2.9 A5.6 5.6 0 0 0 4.5 7.6" fill="none" stroke="#055e9b" stroke-width="1.8" stroke-linecap="round"/><path d="M1.3 7.3 L7.7 7.3 L4.5 11.2 Z" fill="#055e9b"/><path d="M7.6 13.1 A5.6 5.6 0 0 0 15.5 8.4" fill="none" stroke="#055e9b" stroke-width="1.8" stroke-linecap="round"/><path d="M12.3 8.7 L18.7 8.7 L15.5 4.8 Z" fill="#055e9b"/></svg>
<svg class="r" style="left:1874.5px;top:129px;" width="17" height="17" viewBox="0 0 17 17"><circle cx="8.5" cy="8.5" r="8.2" fill="#055e9b"/><path d="M5.2 5.2 L11.8 11.8 M11.8 5.2 L5.2 11.8" stroke="#fff" stroke-width="1.4"/></svg>
<div class="r" style="left:640px;top:155px;width:1254px;height:40px;background:#f9f9f9;"></div>
<div class="r" style="left:1680px;top:162.5px;width:129px;height:25px;background:#055e9b;border-radius:2px;"></div>
<div class="t" style="left:1744.5px;transform:translateX(-50%) scaleX(0.9134);top:170.35px;font-size:11.3px;color:#ffffff;font-weight:normal;">CLEAR ORDER QTY</div>
<div class="r" style="left:1819px;top:162.5px;width:75px;height:25px;background:#055e9b;border-radius:2px;"></div>
<div class="t" style="left:1856.5px;transform:translateX(-50%) scaleX(0.8642);top:170.35px;font-size:11.3px;color:#ffffff;font-weight:normal;">DELETE</div>
<div class="r" style="left:640px;top:195px;width:1248px;height:1px;background:#e6e6e6;"></div>
<div class="r" style="left:640px;top:195px;width:1px;height:785px;background:#dcdcdc;"></div>
<div class="r" style="left:1887px;top:195px;width:1px;height:785px;background:#dcdcdc;"></div>
<div class="r" style="left:1903px;top:195px;width:1px;height:785px;background:#e4e4e4;"></div>
<div class="r" style="left:640px;top:979px;width:1264px;height:1px;background:#e0e0e0;"></div>
<div class="r" style="left:641px;top:326px;width:1246px;height:29px;background:#ebf3f8;"></div>
<div class="r" style="left:641px;top:384px;width:1246px;height:29px;background:#ebf3f8;"></div>
<div class="r" style="left:641px;top:442px;width:1246px;height:29px;background:#ebf3f8;"></div>
<div class="r" style="left:641px;top:500px;width:1246px;height:29px;background:#ebf3f8;"></div>
<div class="r" style="left:641px;top:558px;width:1246px;height:29px;background:#ebf3f8;"></div>
<div class="r" style="left:641px;top:616px;width:1246px;height:29px;background:#ebf3f8;"></div>
<div class="r" style="left:641px;top:674px;width:1246px;height:29px;background:#ebf3f8;"></div>
<div class="r" style="left:641px;top:732px;width:1246px;height:29px;background:#ebf3f8;"></div>
<div class="r" style="left:641px;top:790px;width:1246px;height:29px;background:#ebf3f8;"></div>
<div class="r" style="left:641px;top:848px;width:1246px;height:29px;background:#ebf3f8;"></div>
<div class="r" style="left:641px;top:906px;width:1246px;height:29px;background:#ebf3f8;"></div>
<div class="r" style="left:670px;top:266px;width:1px;height:713px;background:#e3e6e8;"></div>
<div class="r" style="left:1045px;top:266px;width:1px;height:713px;background:#e3e6e8;"></div>
<div class="r" style="left:1391px;top:266px;width:1px;height:713px;background:#e3e6e8;"></div>
<div class="r" style="left:1471px;top:266px;width:1px;height:713px;background:#e3e6e8;"></div>
<div class="r" style="left:1551px;top:266px;width:1px;height:713px;background:#e3e6e8;"></div>
<div class="r" style="left:1631px;top:266px;width:1px;height:713px;background:#e3e6e8;"></div>
<div class="r" style="left:1711px;top:266px;width:1px;height:713px;background:#e3e6e8;"></div>
<div class="r" style="left:1791px;top:266px;width:1px;height:713px;background:#e3e6e8;"></div>
<div class="r" style="left:1871px;top:266px;width:1px;height:713px;background:#e3e6e8;"></div>
<div class="r" style="left:1295px;top:195px;width:2px;height:784px;background:#c8c8c8;"></div>
<div class="r" style="left:670px;top:195px;width:1px;height:71px;background:#e3e6e8;"></div>
<div class="r" style="left:1045px;top:195px;width:1px;height:71px;background:#e3e6e8;"></div>
<div class="r" style="left:1297px;top:236px;width:559px;height:1px;background:#e6e6e6;"></div>
<div class="r" style="left:1376px;top:237px;width:1px;height:29px;background:#e3e6e8;"></div>
<div class="r" style="left:1456px;top:237px;width:1px;height:29px;background:#e3e6e8;"></div>
<div class="r" style="left:1536px;top:237px;width:1px;height:29px;background:#e3e6e8;"></div>
<div class="r" style="left:1616px;top:237px;width:1px;height:29px;background:#e3e6e8;"></div>
<div class="r" style="left:1696px;top:237px;width:1px;height:29px;background:#e3e6e8;"></div>
<div class="r" style="left:1776px;top:237px;width:1px;height:29px;background:#e3e6e8;"></div>
<div class="r" style="left:1856px;top:237px;width:1px;height:29px;background:#e3e6e8;"></div>
<div class="r" style="left:641px;top:266px;width:1246px;height:1px;background:#1a63a0;"></div>
<div class="r" style="left:641px;top:296px;width:1246px;height:1px;background:#1a63a0;"></div>
<svg class="r" style="left:647px;top:222px;" width="18" height="18" viewBox="0 0 18 18"><rect x="1" y="1" width="16" height="16" rx="2" fill="none" stroke="#055e9b" stroke-width="2"/></svg>
<div class="t" style="left:676px;transform:scaleX(0.95);transform-origin:0 0;top:225.22px;font-size:12px;color:#262626;font-weight:normal;">Item</div>
<div class="t" style="left:1051px;transform:scaleX(1.0015);transform-origin:0 0;top:225.22px;font-size:12px;color:#262626;font-weight:normal;">Description</div>
<div class="t sb" style="left:1491.2px;transform:scaleX(1.0361);transform-origin:0 0;top:198.02px;font-size:12px;color:#262626;font-weight:normal;">To</div>
<div class="t" style="left:1462.4px;transform:scaleX(0.9594);transform-origin:0 0;top:218.52px;font-size:12px;color:#262626;font-weight:normal;">Spring Valley</div>
<div class="t" style="left:1302px;transform:scaleX(1.0081);transform-origin:0 0;top:246.02px;font-size:12px;color:#262626;font-weight:normal;">Sold</div>
<div class="t" style="left:1384px;transform:scaleX(0.9524);transform-origin:0 0;top:246.02px;font-size:12px;color:#262626;font-weight:normal;">Stock</div>
<div class="t" style="left:1462.4px;transform:scaleX(1.0629);transform-origin:0 0;top:246.02px;font-size:12px;color:#262626;font-weight:normal;">Incoming</div>
<div class="t" style="left:1542.3px;transform:scaleX(0.9455);transform-origin:0 0;top:246.02px;font-size:12px;color:#262626;font-weight:normal;">Requested</div>
<div class="t" style="left:1622.5px;transform:scaleX(0.9398);transform-origin:0 0;top:246.02px;font-size:12px;color:#262626;font-weight:normal;">Forecast</div>
<div class="t" style="left:1702.4px;transform:scaleX(0.9855);transform-origin:0 0;top:246.02px;font-size:12px;color:#262626;font-weight:normal;">Suggest</div>
<div class="t" style="left:1781.9px;transform:scaleX(1.0006);transform-origin:0 0;top:246.02px;font-size:12px;color:#262626;font-weight:normal;">Order Qty</div>
<svg class="r" style="left:647px;top:272.3px;" width="18" height="18" viewBox="0 0 18 18"><rect x="0" y="0" width="18" height="18" rx="2.5" fill="#055e9b"/><path d="M3.3 9.2 L7.2 12.8 L14.4 4.6" fill="none" stroke="#fff" stroke-width="2"/></svg>
<div class="t" style="left:671.8px;transform:scaleX(0.9);transform-origin:0 0;top:275.72px;font-size:12px;color:#262626;font-weight:normal;">0</div>
<div class="t" style="left:1046px;transform:scaleX(0.95);transform-origin:0 0;top:275.72px;font-size:12px;color:#262626;font-weight:normal;">qewr</div>
<div class="t" style="left:1316.7px;transform:scaleX(0.9);transform-origin:0 0;top:275.72px;font-size:12px;color:#262626;font-weight:normal;">6.000</div>
<div class="t" style="left:1396.7px;transform:scaleX(0.9);transform-origin:0 0;top:275.72px;font-size:12px;color:#262626;font-weight:normal;">5.000</div>
<div class="t" style="left:1476.7px;transform:scaleX(0.9);transform-origin:0 0;top:275.72px;font-size:12px;color:#262626;font-weight:normal;">117.000</div>
<div class="t" style="left:1556.7px;transform:scaleX(0.9);transform-origin:0 0;top:275.72px;font-size:12px;color:#262626;font-weight:normal;">1.000</div>
<div class="t" style="left:1636.7px;transform:scaleX(0.9);transform-origin:0 0;top:275.72px;font-size:12px;color:#262626;font-weight:normal;">0.000</div>
<div class="t" style="left:1716.7px;transform:scaleX(0.9);transform-origin:0 0;top:275.72px;font-size:12px;color:#14629f;font-weight:normal;">0.000</div>
<div class="t" style="left:1793.7px;transform:scaleX(0.92);transform-origin:0 0;top:277.87px;font-size:12.3px;color:#262626;font-weight:normal;">0.000</div>
<svg class="r" style="left:1863.7px;top:272.3px;" width="6" height="19" viewBox="0 0 6 19"><rect x="0" y="0" width="4.4" height="4.3" fill="#055e9b"/><rect x="0" y="6.9" width="4.4" height="4.3" fill="#055e9b"/><rect x="0" y="13.8" width="4.4" height="4.3" fill="#055e9b"/></svg>
<svg class="r" style="left:647px;top:302.7px;" width="18" height="18" viewBox="0 0 18 18"><rect x="1" y="1" width="16" height="16" rx="2" fill="none" stroke="#055e9b" stroke-width="2"/></svg>
<div class="t" style="left:671.8px;transform:scaleX(0.9);transform-origin:0 0;top:305.62px;font-size:12px;color:#262626;font-weight:normal;">00</div>
<div class="t" style="left:1316.7px;transform:scaleX(0.9);transform-origin:0 0;top:305.62px;font-size:12px;color:#262626;font-weight:normal;">139.000</div>
<div class="t" style="left:1396.7px;transform:scaleX(0.9);transform-origin:0 0;top:305.62px;font-size:12px;color:#262626;font-weight:normal;">41.000</div>
<div class="t" style="left:1476.7px;transform:scaleX(0.9);transform-origin:0 0;top:305.62px;font-size:12px;color:#262626;font-weight:normal;">151.000</div>
<div class="t" style="left:1556.7px;transform:scaleX(0.9);transform-origin:0 0;top:305.62px;font-size:12px;color:#262626;font-weight:normal;">0.000</div>
<div class="t" style="left:1636.7px;transform:scaleX(0.9);transform-origin:0 0;top:305.62px;font-size:12px;color:#262626;font-weight:normal;">0.000</div>
<div class="t" style="left:1716.7px;transform:scaleX(0.9);transform-origin:0 0;top:305.62px;font-size:12px;color:#14629f;font-weight:normal;">0.000</div>
<div class="t" style="left:1793.7px;transform:scaleX(0.92);transform-origin:0 0;top:307.77px;font-size:12.3px;color:#262626;font-weight:normal;">0.000</div>
<svg class="r" style="left:1863.7px;top:302.2px;" width="6" height="19" viewBox="0 0 6 19"><rect x="0" y="0" width="4.4" height="4.3" fill="#055e9b"/><rect x="0" y="6.9" width="4.4" height="4.3" fill="#055e9b"/><rect x="0" y="13.8" width="4.4" height="4.3" fill="#055e9b"/></svg>
<svg class="r" style="left:647px;top:331.7px;" width="18" height="18" viewBox="0 0 18 18"><rect x="1" y="1" width="16" height="16" rx="2" fill="none" stroke="#055e9b" stroke-width="2"/></svg>
<div class="t" style="left:671.8px;transform:scaleX(0.9);transform-origin:0 0;top:334.62px;font-size:12px;color:#262626;font-weight:normal;">0001</div>
<div class="t" style="left:1046px;transform:scaleX(0.95);transform-origin:0 0;top:334.62px;font-size:12px;color:#262626;font-weight:normal;">asds</div>
<div class="t" style="left:1316.7px;transform:scaleX(0.9);transform-origin:0 0;top:334.62px;font-size:12px;color:#262626;font-weight:normal;">52.000</div>
<div class="t" style="left:1396.7px;transform:scaleX(0.9);transform-origin:0 0;top:334.62px;font-size:12px;color:#262626;font-weight:normal;">6.000</div>
<div class="t" style="left:1476.7px;transform:scaleX(0.9);transform-origin:0 0;top:334.62px;font-size:12px;color:#262626;font-weight:normal;">72.000</div>
<div class="t" style="left:1556.7px;transform:scaleX(0.9);transform-origin:0 0;top:334.62px;font-size:12px;color:#262626;font-weight:normal;">10.000</div>
<div class="t" style="left:1636.7px;transform:scaleX(0.9);transform-origin:0 0;top:334.62px;font-size:12px;color:#262626;font-weight:normal;">0.000</div>
<div class="t" style="left:1716.7px;transform:scaleX(0.9);transform-origin:0 0;top:334.62px;font-size:12px;color:#14629f;font-weight:normal;">0.000</div>
<div class="t" style="left:1793.7px;transform:scaleX(0.92);transform-origin:0 0;top:336.77px;font-size:12.3px;color:#262626;font-weight:normal;">0.000</div>
<svg class="r" style="left:1863.7px;top:331.2px;" width="6" height="19" viewBox="0 0 6 19"><rect x="0" y="0" width="4.4" height="4.3" fill="#055e9b"/><rect x="0" y="6.9" width="4.4" height="4.3" fill="#055e9b"/><rect x="0" y="13.8" width="4.4" height="4.3" fill="#055e9b"/></svg>
<svg class="r" style="left:647px;top:360.7px;" width="18" height="18" viewBox="0 0 18 18"><rect x="1" y="1" width="16" height="16" rx="2" fill="none" stroke="#055e9b" stroke-width="2"/></svg>
<div class="t" style="left:671.8px;transform:scaleX(0.9);transform-origin:0 0;top:363.62px;font-size:12px;color:#262626;font-weight:normal;">01</div>
<div class="t" style="left:1046px;transform:scaleX(0.95);transform-origin:0 0;top:363.62px;font-size:12px;color:#262626;font-weight:normal;">11</div>
<div class="t" style="left:1316.7px;transform:scaleX(0.9);transform-origin:0 0;top:363.62px;font-size:12px;color:#262626;font-weight:normal;">11.000</div>
<div class="t" style="left:1396.7px;transform:scaleX(0.9);transform-origin:0 0;top:363.62px;font-size:12px;color:#262626;font-weight:normal;">3.000</div>
<div class="t" style="left:1476.7px;transform:scaleX(0.9);transform-origin:0 0;top:363.62px;font-size:12px;color:#262626;font-weight:normal;">120.000</div>
<div class="t" style="left:1556.7px;transform:scaleX(0.9);transform-origin:0 0;top:363.62px;font-size:12px;color:#262626;font-weight:normal;">10.000</div>
<div class="t" style="left:1636.7px;transform:scaleX(0.9);transform-origin:0 0;top:363.62px;font-size:12px;color:#262626;font-weight:normal;">0.000</div>
<div class="t" style="left:1716.7px;transform:scaleX(0.9);transform-origin:0 0;top:363.62px;font-size:12px;color:#14629f;font-weight:normal;">0.000</div>
<div class="t" style="left:1793.7px;transform:scaleX(0.92);transform-origin:0 0;top:365.77px;font-size:12.3px;color:#262626;font-weight:normal;">0.000</div>
<svg class="r" style="left:1863.7px;top:360.2px;" width="6" height="19" viewBox="0 0 6 19"><rect x="0" y="0" width="4.4" height="4.3" fill="#055e9b"/><rect x="0" y="6.9" width="4.4" height="4.3" fill="#055e9b"/><rect x="0" y="13.8" width="4.4" height="4.3" fill="#055e9b"/></svg>
<svg class="r" style="left:647px;top:389.7px;" width="18" height="18" viewBox="0 0 18 18"><rect x="1" y="1" width="16" height="16" rx="2" fill="none" stroke="#055e9b" stroke-width="2"/></svg>
<div class="t" style="left:671.8px;transform:scaleX(0.9);transform-origin:0 0;top:392.62px;font-size:12px;color:#262626;font-weight:normal;">01 hell uom</div>
<div class="t" style="left:1316.7px;transform:scaleX(0.9);transform-origin:0 0;top:392.62px;font-size:12px;color:#262626;font-weight:normal;">288.000</div>
<div class="t" style="left:1396.7px;transform:scaleX(0.9);transform-origin:0 0;top:392.62px;font-size:12px;color:#262626;font-weight:normal;">1.000 sqin</div>
<div class="t" style="left:1476.7px;transform:scaleX(0.9);transform-origin:0 0;top:392.62px;font-size:12px;color:#262626;font-weight:normal;">146.000</div>
<div class="t" style="left:1556.7px;transform:scaleX(0.9);transform-origin:0 0;top:392.62px;font-size:12px;color:#262626;font-weight:normal;">10.000</div>
<div class="t" style="left:1636.7px;transform:scaleX(0.9);transform-origin:0 0;top:392.62px;font-size:12px;color:#262626;font-weight:normal;">0.000</div>
<div class="t" style="left:1716.7px;transform:scaleX(0.9);transform-origin:0 0;top:392.62px;font-size:12px;color:#14629f;font-weight:normal;">0.000</div>
<div class="t" style="left:1793.7px;transform:scaleX(0.92);transform-origin:0 0;top:394.77px;font-size:12.3px;color:#262626;font-weight:normal;">0.000</div>
<svg class="r" style="left:1863.7px;top:389.2px;" width="6" height="19" viewBox="0 0 6 19"><rect x="0" y="0" width="4.4" height="4.3" fill="#055e9b"/><rect x="0" y="6.9" width="4.4" height="4.3" fill="#055e9b"/><rect x="0" y="13.8" width="4.4" height="4.3" fill="#055e9b"/></svg>
<svg class="r" style="left:647px;top:418.7px;" width="18" height="18" viewBox="0 0 18 18"><rect x="1" y="1" width="16" height="16" rx="2" fill="none" stroke="#055e9b" stroke-width="2"/></svg>
<div class="t" style="left:671.8px;transform:scaleX(0.9);transform-origin:0 0;top:421.62px;font-size:12px;color:#262626;font-weight:normal;">021</div>
<div class="t" style="left:1316.7px;transform:scaleX(0.9);transform-origin:0 0;top:421.62px;font-size:12px;color:#262626;font-weight:normal;">3.000</div>
<div class="t" style="left:1396.7px;transform:scaleX(0.9);transform-origin:0 0;top:421.62px;font-size:12px;color:#262626;font-weight:normal;">0.000</div>
<div class="t" style="left:1476.7px;transform:scaleX(0.9);transform-origin:0 0;top:421.62px;font-size:12px;color:#262626;font-weight:normal;">8.000</div>
<div class="t" style="left:1556.7px;transform:scaleX(0.9);transform-origin:0 0;top:421.62px;font-size:12px;color:#262626;font-weight:normal;">10.000</div>
<div class="t" style="left:1636.7px;transform:scaleX(0.9);transform-origin:0 0;top:421.62px;font-size:12px;color:#262626;font-weight:normal;">0.000</div>
<div class="t" style="left:1716.7px;transform:scaleX(0.9);transform-origin:0 0;top:421.62px;font-size:12px;color:#14629f;font-weight:normal;">0.000</div>
<div class="t" style="left:1793.7px;transform:scaleX(0.92);transform-origin:0 0;top:423.77px;font-size:12.3px;color:#262626;font-weight:normal;">0.000</div>
<svg class="r" style="left:1863.7px;top:418.2px;" width="6" height="19" viewBox="0 0 6 19"><rect x="0" y="0" width="4.4" height="4.3" fill="#055e9b"/><rect x="0" y="6.9" width="4.4" height="4.3" fill="#055e9b"/><rect x="0" y="13.8" width="4.4" height="4.3" fill="#055e9b"/></svg>
<svg class="r" style="left:647px;top:447.7px;" width="18" height="18" viewBox="0 0 18 18"><rect x="1" y="1" width="16" height="16" rx="2" fill="none" stroke="#055e9b" stroke-width="2"/></svg>
<div class="t" style="left:671.8px;transform:scaleX(0.9);transform-origin:0 0;top:450.62px;font-size:12px;color:#262626;font-weight:normal;">0310</div>
<div class="t" style="left:1316.7px;transform:scaleX(0.9);transform-origin:0 0;top:450.62px;font-size:12px;color:#262626;font-weight:normal;">14.000</div>
<div class="t" style="left:1396.7px;transform:scaleX(0.9);transform-origin:0 0;top:450.62px;font-size:12px;color:#262626;font-weight:normal;">0.000 ea</div>
<div class="t" style="left:1476.7px;transform:scaleX(0.9);transform-origin:0 0;top:450.62px;font-size:12px;color:#262626;font-weight:normal;">97.000</div>
<div class="t" style="left:1556.7px;transform:scaleX(0.9);transform-origin:0 0;top:450.62px;font-size:12px;color:#262626;font-weight:normal;">14.000</div>
<div class="t" style="left:1636.7px;transform:scaleX(0.9);transform-origin:0 0;top:450.62px;font-size:12px;color:#262626;font-weight:normal;">0.000</div>
<div class="t" style="left:1716.7px;transform:scaleX(0.9);transform-origin:0 0;top:450.62px;font-size:12px;color:#14629f;font-weight:normal;">0.000</div>
<div class="t" style="left:1793.7px;transform:scaleX(0.92);transform-origin:0 0;top:452.77px;font-size:12.3px;color:#262626;font-weight:normal;">0.000</div>
<svg class="r" style="left:1863.7px;top:447.2px;" width="6" height="19" viewBox="0 0 6 19"><rect x="0" y="0" width="4.4" height="4.3" fill="#055e9b"/><rect x="0" y="6.9" width="4.4" height="4.3" fill="#055e9b"/><rect x="0" y="13.8" width="4.4" height="4.3" fill="#055e9b"/></svg>
<svg class="r" style="left:647px;top:476.7px;" width="18" height="18" viewBox="0 0 18 18"><rect x="1" y="1" width="16" height="16" rx="2" fill="none" stroke="#055e9b" stroke-width="2"/></svg>
<div class="t" style="left:671.8px;transform:scaleX(0.9);transform-origin:0 0;top:479.62px;font-size:12px;color:#262626;font-weight:normal;">0311</div>
<div class="t" style="left:1316.7px;transform:scaleX(0.9);transform-origin:0 0;top:479.62px;font-size:12px;color:#262626;font-weight:normal;">71.793</div>
<div class="t" style="left:1396.7px;transform:scaleX(0.9);transform-origin:0 0;top:479.62px;font-size:12px;color:#262626;font-weight:normal;">0.500</div>
<div class="t" style="left:1476.7px;transform:scaleX(0.9);transform-origin:0 0;top:479.62px;font-size:12px;color:#262626;font-weight:normal;">207.000</div>
<div class="t" style="left:1556.7px;transform:scaleX(0.9);transform-origin:0 0;top:479.62px;font-size:12px;color:#262626;font-weight:normal;">0.000</div>
<div class="t" style="left:1636.7px;transform:scaleX(0.9);transform-origin:0 0;top:479.62px;font-size:12px;color:#262626;font-weight:normal;">0.000</div>
<div class="t" style="left:1716.7px;transform:scaleX(0.9);transform-origin:0 0;top:479.62px;font-size:12px;color:#14629f;font-weight:normal;">0.000</div>
<div class="t" style="left:1793.7px;transform:scaleX(0.92);transform-origin:0 0;top:481.77px;font-size:12.3px;color:#262626;font-weight:normal;">0.000</div>
<svg class="r" style="left:1863.7px;top:476.2px;" width="6" height="19" viewBox="0 0 6 19"><rect x="0" y="0" width="4.4" height="4.3" fill="#055e9b"/><rect x="0" y="6.9" width="4.4" height="4.3" fill="#055e9b"/><rect x="0" y="13.8" width="4.4" height="4.3" fill="#055e9b"/></svg>
<svg class="r" style="left:647px;top:505.7px;" width="18" height="18" viewBox="0 0 18 18"><rect x="1" y="1" width="16" height="16" rx="2" fill="none" stroke="#055e9b" stroke-width="2"/></svg>
<div class="t" style="left:671.8px;transform:scaleX(0.9);transform-origin:0 0;top:508.62px;font-size:12px;color:#262626;font-weight:normal;">0315</div>
<div class="t" style="left:1316.7px;transform:scaleX(0.9);transform-origin:0 0;top:508.62px;font-size:12px;color:#262626;font-weight:normal;">140.000</div>
<div class="t" style="left:1396.7px;transform:scaleX(0.9);transform-origin:0 0;top:508.62px;font-size:12px;color:#262626;font-weight:normal;">1.000</div>
<div class="t" style="left:1476.7px;transform:scaleX(0.9);transform-origin:0 0;top:508.62px;font-size:12px;color:#262626;font-weight:normal;">183.000</div>
<div class="t" style="left:1556.7px;transform:scaleX(0.9);transform-origin:0 0;top:508.62px;font-size:12px;color:#262626;font-weight:normal;">4.000</div>
<div class="t" style="left:1636.7px;transform:scaleX(0.9);transform-origin:0 0;top:508.62px;font-size:12px;color:#262626;font-weight:normal;">0.000</div>
<div class="t" style="left:1716.7px;transform:scaleX(0.9);transform-origin:0 0;top:508.62px;font-size:12px;color:#14629f;font-weight:normal;">0.000</div>
<div class="t" style="left:1793.7px;transform:scaleX(0.92);transform-origin:0 0;top:510.77px;font-size:12.3px;color:#262626;font-weight:normal;">0.000</div>
<svg class="r" style="left:1863.7px;top:505.2px;" width="6" height="19" viewBox="0 0 6 19"><rect x="0" y="0" width="4.4" height="4.3" fill="#055e9b"/><rect x="0" y="6.9" width="4.4" height="4.3" fill="#055e9b"/><rect x="0" y="13.8" width="4.4" height="4.3" fill="#055e9b"/></svg>
<svg class="r" style="left:647px;top:534.6999999999999px;" width="18" height="18" viewBox="0 0 18 18"><rect x="1" y="1" width="16" height="16" rx="2" fill="none" stroke="#055e9b" stroke-width="2"/></svg>
<div class="t" style="left:671.8px;transform:scaleX(0.9);transform-origin:0 0;top:537.62px;font-size:12px;color:#262626;font-weight:normal;">0316</div>
<div class="t" style="left:1046px;transform:scaleX(0.95);transform-origin:0 0;top:537.62px;font-size:12px;color:#262626;font-weight:normal;">test</div>
<div class="t" style="left:1316.7px;transform:scaleX(0.9);transform-origin:0 0;top:537.62px;font-size:12px;color:#262626;font-weight:normal;">65.000</div>
<div class="t" style="left:1396.7px;transform:scaleX(0.9);transform-origin:0 0;top:537.62px;font-size:12px;color:#262626;font-weight:normal;">461.433 ea</div>
<div class="t" style="left:1476.7px;transform:scaleX(0.9);transform-origin:0 0;top:537.62px;font-size:12px;color:#262626;font-weight:normal;">3,518.000</div>
<div class="t" style="left:1556.7px;transform:scaleX(0.9);transform-origin:0 0;top:537.62px;font-size:12px;color:#262626;font-weight:normal;">158.000</div>
<div class="t" style="left:1636.7px;transform:scaleX(0.9);transform-origin:0 0;top:537.62px;font-size:12px;color:#262626;font-weight:normal;">0.000</div>
<div class="t" style="left:1716.7px;transform:scaleX(0.9);transform-origin:0 0;top:537.62px;font-size:12px;color:#14629f;font-weight:normal;">0.000</div>
<div class="t" style="left:1793.7px;transform:scaleX(0.92);transform-origin:0 0;top:539.77px;font-size:12.3px;color:#262626;font-weight:normal;">0.000</div>
<svg class="r" style="left:1863.7px;top:534.1999999999999px;" width="6" height="19" viewBox="0 0 6 19"><rect x="0" y="0" width="4.4" height="4.3" fill="#055e9b"/><rect x="0" y="6.9" width="4.4" height="4.3" fill="#055e9b"/><rect x="0" y="13.8" width="4.4" height="4.3" fill="#055e9b"/></svg>
<svg class="r" style="left:647px;top:563.6999999999999px;" width="18" height="18" viewBox="0 0 18 18"><rect x="1" y="1" width="16" height="16" rx="2" fill="none" stroke="#055e9b" stroke-width="2"/></svg>
<div class="t" style="left:671.8px;transform:scaleX(0.9);transform-origin:0 0;top:566.62px;font-size:12px;color:#262626;font-weight:normal;">0556</div>
<div class="t" style="left:1316.7px;transform:scaleX(0.9);transform-origin:0 0;top:566.62px;font-size:12px;color:#262626;font-weight:normal;">1,728.000</div>
<div class="t" style="left:1396.7px;transform:scaleX(0.9);transform-origin:0 0;top:566.62px;font-size:12px;color:#262626;font-weight:normal;">0.000 sqin</div>
<div class="t" style="left:1476.7px;transform:scaleX(0.9);transform-origin:0 0;top:566.62px;font-size:12px;color:#262626;font-weight:normal;">144.000</div>
<div class="t" style="left:1556.7px;transform:scaleX(0.9);transform-origin:0 0;top:566.62px;font-size:12px;color:#262626;font-weight:normal;">0.000</div>
<div class="t" style="left:1636.7px;transform:scaleX(0.9);transform-origin:0 0;top:566.62px;font-size:12px;color:#262626;font-weight:normal;">0.000</div>
<div class="t" style="left:1716.7px;transform:scaleX(0.9);transform-origin:0 0;top:566.62px;font-size:12px;color:#14629f;font-weight:normal;">0.000</div>
<div class="t" style="left:1793.7px;transform:scaleX(0.92);transform-origin:0 0;top:568.77px;font-size:12.3px;color:#262626;font-weight:normal;">0.000</div>
<svg class="r" style="left:1863.7px;top:563.1999999999999px;" width="6" height="19" viewBox="0 0 6 19"><rect x="0" y="0" width="4.4" height="4.3" fill="#055e9b"/><rect x="0" y="6.9" width="4.4" height="4.3" fill="#055e9b"/><rect x="0" y="13.8" width="4.4" height="4.3" fill="#055e9b"/></svg>
<svg class="r" style="left:647px;top:592.6999999999999px;" width="18" height="18" viewBox="0 0 18 18"><rect x="1" y="1" width="16" height="16" rx="2" fill="none" stroke="#055e9b" stroke-width="2"/></svg>
<div class="t" style="left:671.8px;transform:scaleX(0.9);transform-origin:0 0;top:595.62px;font-size:12px;color:#262626;font-weight:normal;">05678</div>
<div class="t" style="left:1316.7px;transform:scaleX(0.9);transform-origin:0 0;top:595.62px;font-size:12px;color:#262626;font-weight:normal;">2.000</div>
<div class="t" style="left:1396.7px;transform:scaleX(0.9);transform-origin:0 0;top:595.62px;font-size:12px;color:#262626;font-weight:normal;">798.000</div>
<div class="t" style="left:1476.7px;transform:scaleX(0.9);transform-origin:0 0;top:595.62px;font-size:12px;color:#262626;font-weight:normal;">2.000</div>
<div class="t" style="left:1556.7px;transform:scaleX(0.9);transform-origin:0 0;top:595.62px;font-size:12px;color:#262626;font-weight:normal;">2.000</div>
<div class="t" style="left:1636.7px;transform:scaleX(0.9);transform-origin:0 0;top:595.62px;font-size:12px;color:#262626;font-weight:normal;">0.000</div>
<div class="t" style="left:1716.7px;transform:scaleX(0.9);transform-origin:0 0;top:595.62px;font-size:12px;color:#14629f;font-weight:normal;">1,000.000</div>
<div class="t" style="left:1793.7px;transform:scaleX(0.92);transform-origin:0 0;top:597.77px;font-size:12.3px;color:#262626;font-weight:normal;">1,000.000</div>
<svg class="r" style="left:1863.7px;top:592.1999999999999px;" width="6" height="19" viewBox="0 0 6 19"><rect x="0" y="0" width="4.4" height="4.3" fill="#055e9b"/><rect x="0" y="6.9" width="4.4" height="4.3" fill="#055e9b"/><rect x="0" y="13.8" width="4.4" height="4.3" fill="#055e9b"/></svg>
<svg class="r" style="left:647px;top:621.6999999999999px;" width="18" height="18" viewBox="0 0 18 18"><rect x="1" y="1" width="16" height="16" rx="2" fill="none" stroke="#055e9b" stroke-width="2"/></svg>
<div class="t" style="left:671.8px;transform:scaleX(0.9);transform-origin:0 0;top:624.62px;font-size:12px;color:#262626;font-weight:normal;">091</div>
<div class="t" style="left:1316.7px;transform:scaleX(0.9);transform-origin:0 0;top:624.62px;font-size:12px;color:#262626;font-weight:normal;">0.000</div>
<div class="t" style="left:1396.7px;transform:scaleX(0.9);transform-origin:0 0;top:624.62px;font-size:12px;color:#262626;font-weight:normal;">6.000</div>
<div class="t" style="left:1476.7px;transform:scaleX(0.9);transform-origin:0 0;top:624.62px;font-size:12px;color:#262626;font-weight:normal;">0.000</div>
<div class="t" style="left:1556.7px;transform:scaleX(0.9);transform-origin:0 0;top:624.62px;font-size:12px;color:#262626;font-weight:normal;">0.000</div>
<div class="t" style="left:1636.7px;transform:scaleX(0.9);transform-origin:0 0;top:624.62px;font-size:12px;color:#262626;font-weight:normal;">0.000</div>
<div class="t" style="left:1716.7px;transform:scaleX(0.9);transform-origin:0 0;top:624.62px;font-size:12px;color:#14629f;font-weight:normal;">0.000</div>
<div class="t" style="left:1793.7px;transform:scaleX(0.92);transform-origin:0 0;top:626.77px;font-size:12.3px;color:#262626;font-weight:normal;">0.000</div>
<svg class="r" style="left:1863.7px;top:621.1999999999999px;" width="6" height="19" viewBox="0 0 6 19"><rect x="0" y="0" width="4.4" height="4.3" fill="#055e9b"/><rect x="0" y="6.9" width="4.4" height="4.3" fill="#055e9b"/><rect x="0" y="13.8" width="4.4" height="4.3" fill="#055e9b"/></svg>
<svg class="r" style="left:647px;top:650.6999999999999px;" width="18" height="18" viewBox="0 0 18 18"><rect x="1" y="1" width="16" height="16" rx="2" fill="none" stroke="#055e9b" stroke-width="2"/></svg>
<div class="t" style="left:671.8px;transform:scaleX(0.9);transform-origin:0 0;top:653.62px;font-size:12px;color:#262626;font-weight:normal;">0912</div>
<div class="t" style="left:1316.7px;transform:scaleX(0.9);transform-origin:0 0;top:653.62px;font-size:12px;color:#262626;font-weight:normal;">1.000</div>
<div class="t" style="left:1396.7px;transform:scaleX(0.9);transform-origin:0 0;top:653.62px;font-size:12px;color:#262626;font-weight:normal;">0.000</div>
<div class="t" style="left:1476.7px;transform:scaleX(0.9);transform-origin:0 0;top:653.62px;font-size:12px;color:#262626;font-weight:normal;">1.000</div>
<div class="t" style="left:1556.7px;transform:scaleX(0.9);transform-origin:0 0;top:653.62px;font-size:12px;color:#262626;font-weight:normal;">0.000</div>
<div class="t" style="left:1636.7px;transform:scaleX(0.9);transform-origin:0 0;top:653.62px;font-size:12px;color:#262626;font-weight:normal;">0.000</div>
<div class="t" style="left:1716.7px;transform:scaleX(0.9);transform-origin:0 0;top:653.62px;font-size:12px;color:#14629f;font-weight:normal;">1,000.000</div>
<div class="t" style="left:1793.7px;transform:scaleX(0.92);transform-origin:0 0;top:655.77px;font-size:12.3px;color:#262626;font-weight:normal;">1,000.000</div>
<svg class="r" style="left:1863.7px;top:650.1999999999999px;" width="6" height="19" viewBox="0 0 6 19"><rect x="0" y="0" width="4.4" height="4.3" fill="#055e9b"/><rect x="0" y="6.9" width="4.4" height="4.3" fill="#055e9b"/><rect x="0" y="13.8" width="4.4" height="4.3" fill="#055e9b"/></svg>
<svg class="r" style="left:1863.7px;top:679.1999999999999px;" width="6" height="19" viewBox="0 0 6 19"><rect x="0" y="0" width="4.4" height="4.3" fill="#055e9b"/><rect x="0" y="6.9" width="4.4" height="4.3" fill="#055e9b"/><rect x="0" y="13.8" width="4.4" height="4.3" fill="#055e9b"/></svg>
<svg class="r" style="left:1863.7px;top:708.1999999999999px;" width="6" height="19" viewBox="0 0 6 19"><rect x="0" y="0" width="4.4" height="4.3" fill="#055e9b"/><rect x="0" y="6.9" width="4.4" height="4.3" fill="#055e9b"/><rect x="0" y="13.8" width="4.4" height="4.3" fill="#055e9b"/></svg>
<svg class="r" style="left:1863.7px;top:737.1999999999999px;" width="6" height="19" viewBox="0 0 6 19"><rect x="0" y="0" width="4.4" height="4.3" fill="#055e9b"/><rect x="0" y="6.9" width="4.4" height="4.3" fill="#055e9b"/><rect x="0" y="13.8" width="4.4" height="4.3" fill="#055e9b"/></svg>
<svg class="r" style="left:1863.7px;top:766.1999999999999px;" width="6" height="19" viewBox="0 0 6 19"><rect x="0" y="0" width="4.4" height="4.3" fill="#055e9b"/><rect x="0" y="6.9" width="4.4" height="4.3" fill="#055e9b"/><rect x="0" y="13.8" width="4.4" height="4.3" fill="#055e9b"/></svg>
<svg class="r" style="left:1863.7px;top:795.1999999999999px;" width="6" height="19" viewBox="0 0 6 19"><rect x="0" y="0" width="4.4" height="4.3" fill="#055e9b"/><rect x="0" y="6.9" width="4.4" height="4.3" fill="#055e9b"/><rect x="0" y="13.8" width="4.4" height="4.3" fill="#055e9b"/></svg>
<svg class="r" style="left:1863.7px;top:824.1999999999999px;" width="6" height="19" viewBox="0 0 6 19"><rect x="0" y="0" width="4.4" height="4.3" fill="#055e9b"/><rect x="0" y="6.9" width="4.4" height="4.3" fill="#055e9b"/><rect x="0" y="13.8" width="4.4" height="4.3" fill="#055e9b"/></svg>
<svg class="r" style="left:1863.7px;top:853.1999999999999px;" width="6" height="19" viewBox="0 0 6 19"><rect x="0" y="0" width="4.4" height="4.3" fill="#055e9b"/><rect x="0" y="6.9" width="4.4" height="4.3" fill="#055e9b"/><rect x="0" y="13.8" width="4.4" height="4.3" fill="#055e9b"/></svg>
<svg class="r" style="left:1863.7px;top:882.1999999999999px;" width="6" height="19" viewBox="0 0 6 19"><rect x="0" y="0" width="4.4" height="4.3" fill="#055e9b"/><rect x="0" y="6.9" width="4.4" height="4.3" fill="#055e9b"/><rect x="0" y="13.8" width="4.4" height="4.3" fill="#055e9b"/></svg>
<svg class="r" style="left:1863.7px;top:911.1999999999999px;" width="6" height="19" viewBox="0 0 6 19"><rect x="0" y="0" width="4.4" height="4.3" fill="#055e9b"/><rect x="0" y="6.9" width="4.4" height="4.3" fill="#055e9b"/><rect x="0" y="13.8" width="4.4" height="4.3" fill="#055e9b"/></svg>
<svg class="r" style="left:1863.7px;top:940.1999999999999px;" width="6" height="19" viewBox="0 0 6 19"><rect x="0" y="0" width="4.4" height="4.3" fill="#055e9b"/><rect x="0" y="6.9" width="4.4" height="4.3" fill="#055e9b"/><rect x="0" y="13.8" width="4.4" height="4.3" fill="#055e9b"/></svg>
<svg class="r" style="left:1891.5px;top:270.5px;" width="8" height="6" viewBox="0 0 8 6"><path d="M0.7 5 L3.9 1.2 L7.1 5" fill="none" stroke="#e2e2e2" stroke-width="1.1"/></svg>
<div class="r" style="left:1892px;top:281px;width:7px;height:20px;background:#dcdcdc;"></div>
<svg class="r" style="left:1890px;top:953px;" width="11" height="7" viewBox="0 0 11 7"><path d="M1 1 L5.5 5.5 L10 1" fill="none" stroke="#dedede" stroke-width="1.2"/></svg>
<div class="r" style="left:1874px;top:997.3px;width:30px;height:25.2px;background:#055e9b;border-radius:2px;"></div>
<div class="t" style="right:29.799999999999955px;transform:scaleX(0.96);transform-origin:100% 0;top:1004.82px;font-size:12px;color:#fff;font-weight:normal;">SAVE ORDER REQUESTS</div>
<div class="r" style="left:1905px;top:86px;width:15px;height:954px;background:#686868;"></div>
<svg class="r" style="left:1907px;top:89px;" width="11" height="7" viewBox="0 0 11 7"><path d="M1 6 L5.5 1.5 L10 6" fill="none" stroke="#8a8a8a" stroke-width="1.3"/></svg>
<div class="r" style="left:1909px;top:100px;width:7px;height:719px;background:#dadada;"></div>
<svg class="r" style="left:1907px;top:1028px;" width="11" height="7" viewBox="0 0 11 7"><path d="M1 1 L5.5 5.5 L10 1" fill="none" stroke="#8a8a8a" stroke-width="1.3"/></svg>
<div class="r" style="left:268px;top:662px;width:1607px;height:378px;background:#2b2b2b;"></div>
<div class="r" style="left:270px;top:662px;width:1605px;height:1px;background:#3a3a3a;"></div>
<div class="r" style="left:270px;top:663px;width:1604px;height:34px;background:#636363;"></div>
<div class="t" style="left:286px;transform:scaleX(0.9916);transform-origin:0 0;top:674.25px;font-size:14px;color:#c9c9c9;font-weight:normal;">Consignment Report</div>
<div class="r" style="left:1727.5px;top:679.5px;width:10px;height:1.2px;background:#e0e0e0;"></div>
<svg class="r" style="left:1784px;top:675px;" width="11" height="11" viewBox="0 0 11 11"><rect x="0.6" y="0.6" width="9.8" height="9.8" fill="none" stroke="#e0e0e0" stroke-width="1.2"/></svg>
<svg class="r" style="left:1841px;top:675px;" width="11" height="11" viewBox="0 0 11 11"><path d="M0.5 0.5 L10.5 10.5 M10.5 0.5 L0.5 10.5" stroke="#e6e6e6" stroke-width="1.2"/></svg>
<div class="r" style="left:270px;top:697px;width:1604px;height:343px;background:#ffffff;"></div>
<div class="r" style="left:270px;top:697px;width:1604px;height:39px;background:#eeeeee;"></div>
<div class="r" style="left:1448px;top:697px;width:1px;height:343px;background:#dedede;"></div>
<div class="t" style="left:278px;transform:scaleX(1.0096);transform-origin:0 0;top:711.02px;font-size:12px;color:#666666;font-weight:normal;">Item:</div>
<div class="t" style="left:309px;transform:scaleX(0.92);transform-origin:0 0;top:711.02px;font-size:12px;color:#262626;font-weight:normal;">0</div>
<div class="t" style="left:331px;transform:scaleX(1.0026);transform-origin:0 0;top:711.02px;font-size:12px;color:#666666;font-weight:normal;">Description:</div>
<div class="t" style="left:398.6px;transform:scaleX(0.92);transform-origin:0 0;top:711.02px;font-size:12px;color:#262626;font-weight:normal;">qewr</div>
<div class="t" style="left:808px;transform:scaleX(0.8926);transform-origin:0 0;top:711.02px;font-size:12px;color:#666666;font-weight:normal;">Received:</div>
<div class="t" style="left:859.8px;transform:scaleX(0.92);transform-origin:0 0;top:711.02px;font-size:12px;color:#262626;font-weight:normal;">30</div>
<div class="t" style="left:888px;transform:scaleX(0.9768);transform-origin:0 0;top:711.02px;font-size:12px;color:#666666;font-weight:normal;">Adjustment:</div>
<div class="t" style="left:954px;transform:scaleX(0.92);transform-origin:0 0;top:711.02px;font-size:12px;color:#262626;font-weight:normal;">20</div>
<div class="t" style="left:982px;transform:scaleX(0.9422);transform-origin:0 0;top:711.02px;font-size:12px;color:#666666;font-weight:normal;">Sold:</div>
<div class="t" style="left:1011.9px;transform:scaleX(0.92);transform-origin:0 0;top:711.02px;font-size:12px;color:#262626;font-weight:normal;">6</div>
<div class="t" style="left:1034.6px;transform:scaleX(0.9492);transform-origin:0 0;top:711.02px;font-size:12px;color:#666666;font-weight:normal;">Consignment:</div>
<div class="t" style="left:1109px;transform:scaleX(0.92);transform-origin:0 0;top:711.02px;font-size:12px;color:#262626;font-weight:normal;">0</div>
<div class="t" style="left:1132px;transform:scaleX(0.9398);transform-origin:0 0;top:711.02px;font-size:12px;color:#666666;font-weight:normal;">In Stock:</div>
<div class="t" style="left:1180px;transform:scaleX(0.92);transform-origin:0 0;top:711.02px;font-size:12px;color:#262626;font-weight:normal;">21</div>
<div class="t" style="left:1208px;transform:scaleX(0.9715);transform-origin:0 0;top:711.02px;font-size:12px;color:#666666;font-weight:normal;">Allocated:</div>
<div class="t" style="left:1263.3px;transform:scaleX(0.92);transform-origin:0 0;top:711.02px;font-size:12px;color:#262626;font-weight:normal;">11</div>
<div class="t" style="left:1290.8px;transform:scaleX(0.947);transform-origin:0 0;top:711.02px;font-size:12px;color:#666666;font-weight:normal;">Available:</div>
<div class="t" style="left:1344px;transform:scaleX(0.92);transform-origin:0 0;top:711.02px;font-size:12px;color:#262626;font-weight:normal;">5</div>
<div class="t" style="left:1366.5px;transform:scaleX(0.9276);transform-origin:0 0;top:711.02px;font-size:12px;color:#666666;font-weight:normal;">Damaged:</div>
<div class="t" style="left:1422px;transform:scaleX(0.92);transform-origin:0 0;top:711.02px;font-size:12px;color:#262626;font-weight:normal;">0</div>
<div class="t" style="left:1496.5px;transform:scaleX(0.93);transform-origin:0 0;top:711.22px;font-size:12px;color:#666666;font-weight:normal;">From:</div>
<div class="r" style="left:1532px;top:705px;width:118px;height:23px;background:#ffffff;border-radius:2px;"></div>
<div class="t" style="left:1540px;top:711.32px;font-size:12px;color:#262626;font-weight:normal;">4/24/2021</div>
<svg class="r" style="left:1632.5px;top:709.0px;" width="15" height="15" viewBox="0 0 15 15"><rect x="0.75" y="2" width="13.5" height="12.25" rx="1" fill="none" stroke="#e6e6e6" stroke-width="1.5"/><rect x="0.75" y="2" width="13.5" height="3" fill="#e6e6e6"/><rect x="3" y="0" width="1.5" height="3" fill="#e6e6e6"/><rect x="10.5" y="0" width="1.5" height="3" fill="#e6e6e6"/><rect x="3.5" y="9" width="1.5" height="1.5" fill="#e6e6e6"/><rect x="6.75" y="9" width="1.5" height="1.5" fill="#e6e6e6"/><rect x="10" y="9" width="1.5" height="1.5" fill="#e6e6e6"/></svg>
<div class="t" style="left:1667.3px;transform:scaleX(0.93);transform-origin:0 0;top:711.22px;font-size:12px;color:#666666;font-weight:normal;">To:</div>
<div class="r" style="left:1687px;top:705px;width:118px;height:23px;background:#ffffff;border-radius:2px;"></div>
<div class="t" style="left:1695px;top:711.32px;font-size:12px;color:#262626;font-weight:normal;">5/24/2021</div>
<svg class="r" style="left:1787.5px;top:709.0px;" width="15" height="15" viewBox="0 0 15 15"><rect x="0.75" y="2" width="13.5" height="12.25" rx="1" fill="none" stroke="#e6e6e6" stroke-width="1.5"/><rect x="0.75" y="2" width="13.5" height="3" fill="#e6e6e6"/><rect x="3" y="0" width="1.5" height="3" fill="#e6e6e6"/><rect x="10.5" y="0" width="1.5" height="3" fill="#e6e6e6"/><rect x="3.5" y="9" width="1.5" height="1.5" fill="#e6e6e6"/><rect x="6.75" y="9" width="1.5" height="1.5" fill="#e6e6e6"/><rect x="10" y="9" width="1.5" height="1.5" fill="#e6e6e6"/></svg>
<svg class="r" style="left:1814.8px;top:708.3px;" width="20" height="16" viewBox="0 0 20 16"><path d="M12.4 2.9 A5.6 5.6 0 0 0 4.5 7.6" fill="none" stroke="#055e9b" stroke-width="1.8" stroke-linecap="round"/><path d="M1.3 7.3 L7.7 7.3 L4.5 11.2 Z" fill="#055e9b"/><path d="M7.6 13.1 A5.6 5.6 0 0 0 15.5 8.4" fill="none" stroke="#055e9b" stroke-width="1.8" stroke-linecap="round"/><path d="M12.3 8.7 L18.7 8.7 L15.5 4.8 Z" fill="#055e9b"/></svg>
<svg class="r" style="left:1843px;top:706px;" width="22" height="21" viewBox="0 0 22 21"><path d="M6.9 6.8 V4.4 Q6.9 2.8 8.5 2.8 H16.3 L19.8 6.3 V17.2 Q19.8 18.7 18.3 18.7 H7" fill="none" stroke="#055e9b" stroke-width="1.8"/><path d="M15.6 2.2 L20.4 7 H15.6 Z" fill="#055e9b"/><path d="M2.3 9.3 L7.2 15.8 M7.2 9.3 L2.3 15.8" stroke="#055e9b" stroke-width="1.7"/><rect x="9" y="9" width="3.2" height="1.4" fill="#055e9b"/><rect x="13" y="9" width="3.6" height="1.4" fill="#055e9b"/><rect x="9" y="11.4" width="3.2" height="1.4" fill="#7aa6c8"/><rect x="13" y="11.4" width="3.6" height="1.4" fill="#7aa6c8"/><rect x="9" y="13.9" width="3.2" height="1.5" fill="#055e9b"/><rect x="13" y="13.9" width="3.6" height="1.5" fill="#055e9b"/></svg>
<div class="r" style="left:278px;top:746px;width:1155px;height:39px;background:#e0edf7;"></div>
<svg class="r" style="left:286px;top:758.5px;" width="9" height="14" viewBox="0 0 9 14"><path d="M1.5 1.5 L7 7 L1.5 12.5" fill="none" stroke="#055e9b" stroke-width="1.8"/></svg>
<div class="t" style="left:313px;transform:scaleX(0.9912);transform-origin:0 0;top:758.27px;font-size:15.0px;color:#222222;font-weight:normal;">Item Receipts</div>
<div class="t" style="left:1271px;transform:scaleX(0.9955);transform-origin:0 0;top:759.72px;font-size:12px;color:#555555;font-weight:normal;">Qty:</div>
<div class="t sm" style="left:1297px;transform:scaleX(0.93);transform-origin:0 0;top:759.43px;font-size:12.6px;color:#222222;font-weight:normal;">35</div>
<div class="r" style="left:1324.6px;top:757.5px;width:1px;height:16px;background:#c9d3da;"></div>
<div class="t" style="left:1335.6px;transform:scaleX(0.969);transform-origin:0 0;top:759.72px;font-size:12px;color:#555555;font-weight:normal;">Total:</div>
<div class="t sm" style="left:1367.5px;transform:scaleX(0.93);transform-origin:0 0;top:759.43px;font-size:12.6px;color:#222222;font-weight:normal;">$240.00</div>
<div class="r" style="left:278px;top:795px;width:1155px;height:39px;background:#e0edf7;"></div>
<svg class="r" style="left:286px;top:807.5px;" width="9" height="14" viewBox="0 0 9 14"><path d="M1.5 1.5 L7 7 L1.5 12.5" fill="none" stroke="#055e9b" stroke-width="1.8"/></svg>
<div class="t" style="left:313px;transform:scaleX(1.0184);transform-origin:0 0;top:807.27px;font-size:15.0px;color:#222222;font-weight:normal;">Open Vendor Consignments</div>
<div class="t" style="left:1361px;transform:scaleX(0.9955);transform-origin:0 0;top:808.72px;font-size:12px;color:#555555;font-weight:normal;">Qty:</div>
<div class="t sm" style="left:1387px;transform:scaleX(0.93);transform-origin:0 0;top:808.43px;font-size:12.6px;color:#222222;font-weight:normal;">10</div>
<div class="r" style="left:278px;top:844px;width:1155px;height:39px;background:#e0edf7;"></div>
<svg class="r" style="left:286px;top:856.5px;" width="9" height="14" viewBox="0 0 9 14"><path d="M1.5 1.5 L7 7 L1.5 12.5" fill="none" stroke="#055e9b" stroke-width="1.8"/></svg>
<div class="t" style="left:313px;transform:scaleX(0.9909);transform-origin:0 0;top:856.27px;font-size:15.0px;color:#222222;font-weight:normal;">Bills In Review</div>
<div class="t" style="left:1272.8px;transform:scaleX(1.0049);transform-origin:0 0;top:857.72px;font-size:12px;color:#555555;font-weight:normal;">Qty:</div>
<div class="t sm" style="left:1299px;transform:scaleX(0.93);transform-origin:0 0;top:857.43px;font-size:12.6px;color:#222222;font-weight:normal;">22</div>
<div class="r" style="left:1326.2px;top:855.5px;width:1px;height:16px;background:#c9d3da;"></div>
<div class="t" style="left:1337.5px;transform:scaleX(0.9726);transform-origin:0 0;top:857.72px;font-size:12px;color:#555555;font-weight:normal;">Total:</div>
<div class="t sm" style="left:1369.5px;transform:scaleX(0.93);transform-origin:0 0;top:857.43px;font-size:12.6px;color:#222222;font-weight:normal;">$125.00</div>
<div class="r" style="left:278px;top:893px;width:1155px;height:39px;background:#e0edf7;"></div>
<svg class="r" style="left:286px;top:905.5px;" width="9" height="14" viewBox="0 0 9 14"><path d="M1.5 1.5 L7 7 L1.5 12.5" fill="none" stroke="#055e9b" stroke-width="1.8"/></svg>
<div class="t" style="left:313px;transform:scaleX(1.0487);transform-origin:0 0;top:905.27px;font-size:15.0px;color:#222222;font-weight:normal;">Bills Approved</div>
<div class="t" style="left:1289px;transform:scaleX(0.9955);transform-origin:0 0;top:906.72px;font-size:12px;color:#555555;font-weight:normal;">Qty:</div>
<div class="t sm" style="left:1315px;transform:scaleX(0.93);transform-origin:0 0;top:906.43px;font-size:12.6px;color:#222222;font-weight:normal;">1</div>
<div class="r" style="left:1333.4px;top:904.5px;width:1px;height:16px;background:#c9d3da;"></div>
<div class="t" style="left:1344.2px;transform:scaleX(0.9904);transform-origin:0 0;top:906.72px;font-size:12px;color:#555555;font-weight:normal;">Total:</div>
<div class="t sm" style="left:1376.7px;transform:scaleX(0.93);transform-origin:0 0;top:906.43px;font-size:12.6px;color:#222222;font-weight:normal;">$15.00</div>
<div class="r" style="left:278px;top:942px;width:1155px;height:39px;background:#e0edf7;"></div>
<svg class="r" style="left:286px;top:954.5px;" width="9" height="14" viewBox="0 0 9 14"><path d="M1.5 1.5 L7 7 L1.5 12.5" fill="none" stroke="#055e9b" stroke-width="1.8"/></svg>
<div class="t" style="left:313px;transform:scaleX(0.9871);transform-origin:0 0;top:954.27px;font-size:15.0px;color:#222222;font-weight:normal;">Bill Linked Expenses</div>
<div class="t" style="left:1349.8px;transform:scaleX(0.9618);transform-origin:0 0;top:955.72px;font-size:12px;color:#555555;font-weight:normal;">Total:</div>
<div class="t sm" style="left:1381.5px;transform:scaleX(0.93);transform-origin:0 0;top:955.43px;font-size:12.6px;color:#222222;font-weight:normal;">$0.00</div>
<div class="r" style="left:278px;top:991px;width:1155px;height:39px;background:#e0edf7;"></div>
<svg class="r" style="left:286px;top:1003.5px;" width="9" height="14" viewBox="0 0 9 14"><path d="M1.5 1.5 L7 7 L1.5 12.5" fill="none" stroke="#055e9b" stroke-width="1.8"/></svg>
<div class="t" style="left:313px;transform:scaleX(0.9994);transform-origin:0 0;top:1003.27px;font-size:15.0px;color:#222222;font-weight:normal;">Customer Returns</div>
<div class="t" style="left:1280px;transform:scaleX(0.9861);transform-origin:0 0;top:1004.72px;font-size:12px;color:#555555;font-weight:normal;">Qty:</div>
<div class="t sm" style="left:1305.8px;transform:scaleX(0.93);transform-origin:0 0;top:1004.43px;font-size:12.6px;color:#222222;font-weight:normal;">2</div>
<div class="r" style="left:1326.2px;top:1002.5px;width:1px;height:16px;background:#c9d3da;"></div>
<div class="t" style="left:1337.5px;transform:scaleX(0.9726);transform-origin:0 0;top:1004.72px;font-size:12px;color:#555555;font-weight:normal;">Total:</div>
<div class="t sm" style="left:1369.5px;transform:scaleX(0.93);transform-origin:0 0;top:1004.43px;font-size:12.6px;color:#222222;font-weight:normal;">$139.49</div>
<div class="t" style="left:1457.3px;transform:scaleX(0.9878);transform-origin:0 0;top:749.77px;font-size:15px;color:#222222;font-weight:normal;">Sales Consignment</div>
<div class="r" style="left:1457px;top:776px;width:407px;height:228px;border:1px solid #e2e2e2;"></div>
<div class="r" style="left:1458px;top:807px;width:407px;height:1px;background:#e2e2e2;"></div>
<div class="r" style="left:1458px;top:807px;width:407px;height:25px;background:#ebf3f8;"></div>
<div class="r" style="left:1458px;top:856px;width:407px;height:24px;background:#ebf3f8;"></div>
<div class="r" style="left:1537px;top:777px;width:1px;height:103px;background:#e2e2e2;"></div>
<div class="r" style="left:1617px;top:777px;width:1px;height:103px;background:#e2e2e2;"></div>
<div class="r" style="left:1707px;top:777px;width:1px;height:103px;background:#e2e2e2;"></div>
<div class="r" style="left:1794px;top:777px;width:1px;height:103px;background:#e2e2e2;"></div>
<div class="t" style="left:1463px;transform:scaleX(0.97);transform-origin:0 0;top:787.22px;font-size:12px;color:#262626;font-weight:normal;">Customer</div>
<div class="t" style="left:1543px;transform:scaleX(0.97);transform-origin:0 0;top:787.22px;font-size:12px;color:#262626;font-weight:normal;">Invoice #</div>
<div class="t" style="left:1623px;transform:scaleX(0.97);transform-origin:0 0;top:787.22px;font-size:12px;color:#262626;font-weight:normal;">Bill #</div>
<div class="t" style="left:1713px;transform:scaleX(0.97);transform-origin:0 0;top:787.22px;font-size:12px;color:#262626;font-weight:normal;">Qty</div>
<div class="t" style="left:1800px;transform:scaleX(0.97);transform-origin:0 0;top:787.22px;font-size:12px;color:#262626;font-weight:normal;">Rate</div>
<div class="t" style="left:1463px;transform:scaleX(0.97);transform-origin:0 0;top:814.72px;font-size:12px;color:#262626;font-weight:normal;">BAUER</div>
<div class="t" style="left:1543px;transform:scaleX(0.96);transform-origin:0 0;top:814.72px;font-size:12px;color:#14629f;font-weight:normal;">SO-0038068</div>
<div class="t" style="left:1714px;transform:scaleX(0.97);transform-origin:0 0;top:814.72px;font-size:12px;color:#262626;font-weight:normal;">1</div>
<div class="t" style="left:1800px;transform:scaleX(0.9);transform-origin:0 0;top:814.72px;font-size:12px;color:#262626;font-weight:normal;">$25.00</div>
<div class="t" style="left:1463px;transform:scaleX(0.97);transform-origin:0 0;top:838.92px;font-size:12px;color:#262626;font-weight:normal;">POS test</div>
<div class="t" style="left:1543px;transform:scaleX(0.96);transform-origin:0 0;top:838.92px;font-size:12px;color:#14629f;font-weight:normal;">I-SO-0038042</div>
<div class="t" style="left:1714px;transform:scaleX(0.97);transform-origin:0 0;top:838.92px;font-size:12px;color:#262626;font-weight:normal;">1</div>
<div class="t" style="left:1800px;transform:scaleX(0.9);transform-origin:0 0;top:838.92px;font-size:12px;color:#262626;font-weight:normal;">$70.00</div>
<div class="t" style="left:1463px;transform:scaleX(0.97);transform-origin:0 0;top:863.12px;font-size:12px;color:#262626;font-weight:normal;">Karinatest</div>
<div class="t" style="left:1543px;transform:scaleX(0.96);transform-origin:0 0;top:863.12px;font-size:12px;color:#14629f;font-weight:normal;">I-0037864</div>
<div class="t" style="left:1623px;transform:scaleX(0.96);transform-origin:0 0;top:863.12px;font-size:12px;color:#14629f;font-weight:normal;">B-0013479</div>
<div class="t" style="left:1714px;transform:scaleX(0.97);transform-origin:0 0;top:863.12px;font-size:12px;color:#262626;font-weight:normal;">1</div>
<div class="t" style="left:1800px;transform:scaleX(0.9);transform-origin:0 0;top:863.12px;font-size:12px;color:#262626;font-weight:normal;">$100.00</div>
<div class="t" style="left:1731px;top:1011.72px;font-size:12px;color:#262626;font-weight:normal;">3</div>
<div class="t" style="left:1457.3px;transform:scaleX(0.9992);transform-origin:0 0;top:1028.77px;font-size:15px;color:#222222;font-weight:normal;">Sales No Consignment</div>
<svg class="r" style="left:1435px;top:740px;" width="11" height="7" viewBox="0 0 11 7"><path d="M1 6 L5.5 1.5 L10 6" fill="none" stroke="#e8e8e8" stroke-width="1.2"/></svg>
<svg class="r" style="left:1877px;top:966px;" width="7" height="11" viewBox="0 0 7 11"><path d="M1 1 L5.5 5.5 L1 10" fill="none" stroke="#e8e8e8" stroke-width="1.2"/></svg>
<div class="r" style="left:1276px;top:225.5px;width:102.5px;height:64.5px;border:4.5px solid #f9574b;filter:drop-shadow(2px 2px 1.5px rgba(0,0,0,0.75));"></div>
<div class="r" style="left:965.5px;top:670.5px;width:57px;height:54px;border:4.5px solid #f9574b;filter:drop-shadow(2px 2px 1.5px rgba(0,0,0,0.75));"></div>
<svg class="r" style="left:0;top:0;filter:drop-shadow(2px 2px 1.5px rgba(0,0,0,0.75));" width="1920" height="1040" viewBox="0 0 1920 1040"><path d="M1291 304 L1026 649" stroke="#f9574b" stroke-width="8" stroke-linecap="round"/><path d="M1015.5 662.5 L1018 642 L1034 655 Z" fill="#f9574b" stroke="#f9574b" stroke-width="2" stroke-linejoin="round"/></svg>
</body></html>
